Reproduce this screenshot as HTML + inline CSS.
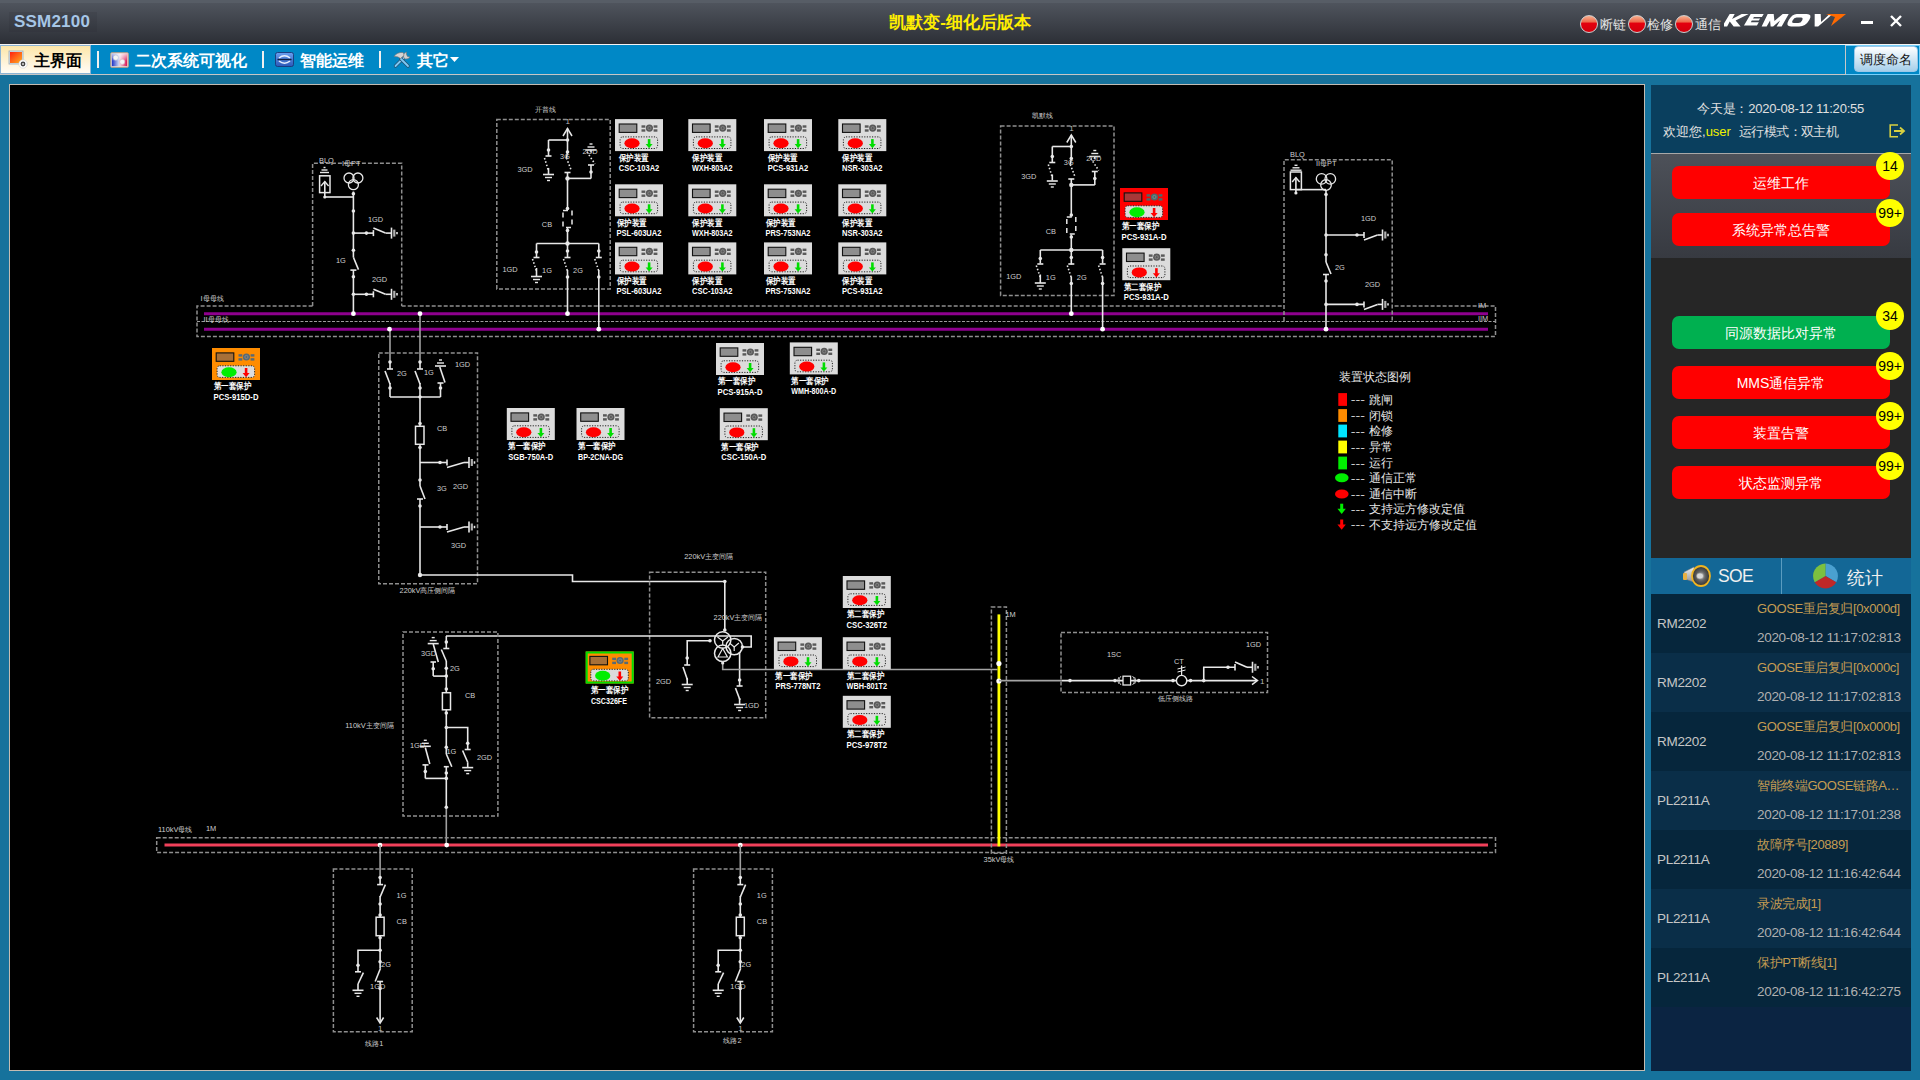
<!DOCTYPE html>
<html><head><meta charset="utf-8">
<style>
*{margin:0;padding:0;box-sizing:border-box}
html,body{width:1920px;height:1080px;overflow:hidden;background:#16729c;font-family:"Liberation Sans",sans-serif}
.abs{position:absolute}
#title{left:0;top:0;width:1920px;height:44px;background:linear-gradient(#575d66 0,#575d66 2.5px,#4f545d 3px,#2c2f36 100%)}
#appname{left:14px;top:11.5px;font-size:17px;font-weight:bold;color:#a6c6e6;letter-spacing:0.2px}
#apptitle{left:0;width:1920px;text-align:center;top:11px;font-size:17px;font-weight:bold;color:#ffee00}
.led{width:18px;height:18px;border-radius:50%;border:1.5px solid #cfcfcf;background:linear-gradient(#f8b090 0%,#ee6848 38%,#e4000e 44%,#d2000c 100%);overflow:hidden}

.ledt{font-size:12.5px;color:#e6e6e6;top:17px;letter-spacing:-0.5px}
#menubar{left:0;top:44px;width:1920px;height:31px;background:#0088c6;border-top:1.5px solid #f4f4f4;border-bottom:1.5px solid #c6c6c6}
#tab0{left:0px;top:45px;width:91px;height:29px;background:linear-gradient(#fde6a8,#fff8e8 80%,#fffcf4);border:1px solid #8cb4d4}
.mt{top:50.5px;font-size:16px;font-weight:bold;color:#fff}
.sep{width:2px;height:17px;background:#f0f0f0;top:51px}
#canvas{left:9px;top:84px;width:1636px;height:987px;border:1.5px solid #c4bcb2;background:#000;overflow:hidden}
#panel{left:1651px;top:85px;width:260px;height:986px;background:#0b2442}
#info{left:0;top:0;width:260px;height:68px;background:#0a3f5e}
#grad{left:0;top:68px;width:260px;height:105px;background:linear-gradient(#4d5159,#373a41);border-top:1.5px solid #a8a8a8}
#dark{left:0;top:173px;width:260px;height:300px;background:#262626}
.btn{left:21px;width:218px;height:33px;border-radius:7px;background:#ff0000;color:#fff;font-size:14px;text-align:center;line-height:35px}
.badge{width:28px;height:28px;border-radius:50%;background:#ffff00;color:#000;font-size:14px;text-align:center;line-height:28px}
#tabs{left:0;top:473px;width:260px;height:36px;background:#136796}
.row{left:0;width:260px;height:59px}
.r1{background:#06263c}.r2{background:#0a2e48}
.dev{left:6px;font-size:13.5px;color:#c6c6c6;letter-spacing:-0.3px;margin-top:1.5px}
.ev{left:106px;width:153px;font-size:13px;color:#c49c52;white-space:nowrap;overflow:hidden;text-overflow:ellipsis;letter-spacing:-0.4px}
.tm{left:106px;font-size:13.5px;color:#b0b0b0;letter-spacing:-0.3px;white-space:nowrap;margin-top:1px}
</style></head><body>
<div id="title" class="abs"></div>
<div class="abs" style="left:9px;top:12px;width:88px;height:20px;background:rgba(30,33,38,0.12)"></div>
<div id="appname" class="abs">SSM2100</div>
<div id="apptitle" class="abs">凯默变-细化后版本</div>
<div class="abs led" style="left:1580px;top:14.5px"></div><div class="abs ledt" style="left:1600px">断链</div>
<div class="abs led" style="left:1628px;top:14.5px"></div><div class="abs ledt" style="left:1647px">检修</div>
<div class="abs led" style="left:1675px;top:14.5px"></div><div class="abs ledt" style="left:1695px">通信</div>
<svg class="abs" style="left:1724px;top:10px" width="126" height="20" viewBox="0 0 126 20">
 <g fill="#fff" transform="skewX(-18) translate(4,0)">
  <path d="M3 4 h5 l-1 5 l8 -5 h7 l-11 6.5 l7 6 h-7 l-5.5 -5 l-1 5 h-5 z"/>
  <path d="M24 4 h13 l-0.8 3 h-8 l-0.4 1.5 h7 l-0.6 2 h-7 l-0.4 1.8 h8 l-0.8 3.2 h-13 z"/>
  <path d="M41 4 h6 l3 7 l6 -7 h6 l-3 12.5 h-5 l1.5 -6 l-5 6 h-2.5 l-2.5 -6 l-1.5 6 h-5 z"/>
  <path d="M70 4 h10 q6 0 4.5 6 q-1.5 6.5 -8 6.5 h-8 q-6 0 -4.5 -6.5 q1.5 -6 6 -6 z M71 7.5 q-2.5 0 -3 3 q-0.5 2.5 2 2.5 h4.5 q2.5 0 3 -2.5 q0.5 -3 -2 -3 z"/>
  <path d="M88 4 h6 l3 8 l6 -8 h3 l-10.5 12.5 h-3.5 z"/>
 </g>
 <path d="M102 4 h20 l-15 12 l4 -9 z" fill="#ff6a00"/>
</svg>
<div class="abs" style="left:1861px;top:21px;width:12px;height:2.5px;background:#fff"></div>
<svg class="abs" style="left:1889px;top:14px" width="14" height="14"><path d="M2 2 L12 12 M12 2 L2 12" stroke="#fff" stroke-width="2.4"/></svg>

<div id="menubar" class="abs"></div>
<div id="tab0" class="abs"></div>
<svg class="abs" style="left:8px;top:50px" width="20" height="19" viewBox="0 0 20 19">
 <rect x="1" y="1" width="14" height="13" fill="#dde4ec" stroke="#9ab" stroke-width="0.8"/>
 <rect x="2" y="2" width="12" height="11" fill="url(#gr1)"/>
 <defs><linearGradient id="gr1" x1="0" y1="0" x2="1" y2="1"><stop offset="0" stop-color="#ff2010"/><stop offset="1" stop-color="#ffb020"/></linearGradient></defs>
 <circle cx="15" cy="14" r="4.2" fill="#fff" stroke="#ccc" stroke-width="0.6"/><circle cx="15" cy="14" r="2.4" fill="#444"/><circle cx="15" cy="14" r="1" fill="#ddd"/>
</svg>
<div class="abs mt" style="left:34px;color:#000">主界面</div>
<div class="abs sep" style="left:97px"></div>
<svg class="abs" style="left:110px;top:51.5px" width="19" height="16" viewBox="0 0 19 16">
 <defs><linearGradient id="g2" x1="0" y1="0" x2="1" y2="0"><stop offset="0" stop-color="#1a30c8"/><stop offset="0.45" stop-color="#c8d0f0"/><stop offset="0.55" stop-color="#f0c8d8"/><stop offset="1" stop-color="#d81050"/></linearGradient>
 <linearGradient id="g2b" x1="0" y1="0" x2="0" y2="1"><stop offset="0" stop-color="#fff" stop-opacity="0.7"/><stop offset="0.6" stop-color="#fff" stop-opacity="0"/></linearGradient></defs>
 <rect x="0.5" y="0.5" width="18" height="15" rx="1.5" fill="#e8ddd0" stroke="#a89888" stroke-width="0.8"/>
 <rect x="1.8" y="1.8" width="15.4" height="12.4" fill="url(#g2)"/>
 <rect x="1.8" y="1.8" width="15.4" height="12.4" fill="url(#g2b)"/>
 <circle cx="5.8" cy="5.6" r="2.6" fill="#f4f4f4" stroke="#b8c0d8" stroke-width="0.6"/>
 <circle cx="12.2" cy="9.8" r="2.6" fill="#f4f4f4" stroke="#d8b0c0" stroke-width="0.6"/>
</svg>
<div class="abs mt" style="left:135px">二次系统可视化</div>
<div class="abs sep" style="left:262px"></div>
<svg class="abs" style="left:274.5px;top:52px" width="19" height="15" viewBox="0 0 19 15">
 <defs><linearGradient id="g3" x1="0" y1="0" x2="0" y2="1"><stop offset="0" stop-color="#6aa0f0"/><stop offset="1" stop-color="#2a58b8"/></linearGradient></defs>
 <rect x="0.5" y="0.5" width="18" height="14" rx="2" fill="url(#g3)" stroke="#1a3878" stroke-width="0.9"/>
 <path d="M4 6 Q9.5 1.5 15 6 M4 9 Q9.5 13.5 15 9" fill="none" stroke="#e8f0ff" stroke-width="1.6"/>
 <path d="M2.5 7.5 H16.5" stroke="#102040" stroke-width="1.3"/>
</svg>
<div class="abs mt" style="left:300px">智能运维</div>
<div class="abs sep" style="left:379px"></div>
<svg class="abs" style="left:393px;top:51px" width="18" height="17" viewBox="0 0 18 17">
 <path d="M2.5 15 L10.5 7" stroke="#23506e" stroke-width="3.2" stroke-linecap="round"/>
 <path d="M2.5 15 L10.5 7" stroke="#80c8f4" stroke-width="1.8" stroke-linecap="round"/>
 <path d="M15 15 L8 8" stroke="#23506e" stroke-width="3.2" stroke-linecap="round"/>
 <path d="M15 15 L8 8" stroke="#80c8f4" stroke-width="1.8" stroke-linecap="round"/>
 <path d="M1 5.5 Q4 1 10 1.5 L11.5 4 L7.5 7.5 Q5 5 1 5.5 Z" fill="#d4d4d4" stroke="#707070" stroke-width="0.6"/>
 <path d="M13.5 1 Q10 2 10.5 6 L12 8 Q15.5 8.5 17 6 L14.5 5.5 L13.5 3.5 Z" fill="#d0d0d0" stroke="#707070" stroke-width="0.6"/>
</svg>
<div class="abs mt" style="left:417px">其它</div>
<svg class="abs" style="left:450px;top:57px" width="9" height="5"><path d="M0 0 H9 L4.5 5 Z" fill="#fff"/></svg>
<div class="abs" style="left:1845px;top:45px;width:1px;height:29px;background:#c8c8c8"></div><div class="abs" style="left:1846px;top:44.5px;width:74px;height:30px;border:1px solid #78d0fa;border-left:none"></div>
<div class="abs" style="left:1854px;top:46px;width:64px;height:26px;border-radius:4px;border:1px solid #9cc8e8;background:linear-gradient(#ffffff,#a6cfea);font-size:12.5px;color:#111;text-align:center;line-height:26px">调度命名</div>

<div id="canvas" class="abs"><svg width="1633" height="984" viewBox="10 85 1633 984" style="position:absolute;left:0;top:0;font-family:'Liberation Sans',sans-serif">
<path d="M312.6 306 H197 V336.5 H1495.5 V306 H1392 M401.7 306 H1284" fill="none" stroke="#8e8e8e" stroke-width="1.5" stroke-dasharray="4,2"/>
<path d="M197 321.5 H1495.5" fill="none" stroke="#9c9c9c" stroke-width="1.2" stroke-dasharray="3,1.5"/>
<line x1="204" y1="313.7" x2="1488" y2="313.7" stroke="#8e008e" stroke-width="3.1"/>
<line x1="204" y1="329.2" x2="1488" y2="329.2" stroke="#8e008e" stroke-width="3.1"/>
<text x="200.5" y="301" font-size="7.4" text-anchor="start" fill="#cfcfcf" font-weight="normal">I母母线</text>
<text x="203.5" y="322" font-size="7.4" text-anchor="start" fill="#cfcfcf" font-weight="normal">II母母线</text>
<text x="1478" y="307.5" font-size="7.4" text-anchor="start" fill="#cfcfcf" font-weight="normal">IM</text>
<text x="1478" y="320.8" font-size="7.4" text-anchor="start" fill="#cfcfcf" font-weight="normal">IIM</text>
<path d="M312.6 306 V163.3 H401.7 V306" fill="none" stroke="#8e8e8e" stroke-width="1.5" stroke-dasharray="4,2"/>
<text x="319" y="163" font-size="7.4" text-anchor="start" fill="#cfcfcf" font-weight="normal">BLQ</text>
<text x="342" y="165.5" font-size="7.4" text-anchor="start" fill="#cfcfcf" font-weight="normal">I母PT</text>
<line x1="320" y1="172.5" x2="329" y2="172.5" stroke="#e8e8e8" stroke-width="1.4"/>
<line x1="321.5" y1="170" x2="327.5" y2="170" stroke="#e8e8e8" stroke-width="1.4"/>
<line x1="323.5" y1="167.5" x2="325.5" y2="167.5" stroke="#e8e8e8" stroke-width="1.4"/>
<rect x="319.6" y="175.8" width="10.4" height="16.8" fill="none" stroke="#e8e8e8" stroke-width="1.5"/>
<polyline points="321,186 324.8,181.5 328.6,186" fill="none" stroke="#e8e8e8" stroke-width="1.4"/>
<line x1="324.8" y1="181.5" x2="324.8" y2="197" stroke="#e8e8e8" stroke-width="1.6"/>
<circle cx="324.8" cy="197" r="1.6" fill="#e8e8e8"/>
<line x1="324.8" y1="197" x2="353.4" y2="197" stroke="#e8e8e8" stroke-width="1.6"/>
<circle cx="349" cy="178" r="5" fill="none" stroke="#e8e8e8" stroke-width="1.3"/>
<circle cx="357.9" cy="178" r="5" fill="none" stroke="#e8e8e8" stroke-width="1.3"/>
<circle cx="353.4" cy="184.7" r="5" fill="none" stroke="#e8e8e8" stroke-width="1.3"/>
<line x1="353.4" y1="191.5" x2="353.4" y2="250.3" stroke="#e8e8e8" stroke-width="1.6"/>
<circle cx="353.4" cy="193.8" r="1.8" fill="#e8e8e8"/>
<circle cx="353.4" cy="211" r="1.8" fill="#e8e8e8"/>
<circle cx="353.4" cy="233.1" r="1.8" fill="#e8e8e8"/>
<line x1="353.4" y1="233.1" x2="373.4" y2="233.1" stroke="#e8e8e8" stroke-width="1.6"/>
<circle cx="366.4" cy="233.1" r="1.8" fill="#e8e8e8"/>
<line x1="373.4" y1="230.1" x2="373.4" y2="236.1" stroke="#e8e8e8" stroke-width="1.6"/>
<line x1="373.4" y1="228.1" x2="385.5" y2="233.1" stroke="#e8e8e8" stroke-width="1.6"/>
<line x1="385.5" y1="233.1" x2="391.5" y2="233.1" stroke="#e8e8e8" stroke-width="1.6"/>
<line x1="391.5" y1="227.6" x2="391.5" y2="238.6" stroke="#e8e8e8" stroke-width="1.6"/>
<line x1="394.3" y1="229.6" x2="394.3" y2="236.6" stroke="#b0b0b0" stroke-width="2.2"/>
<line x1="397.0" y1="231.9" x2="397.0" y2="234.29999999999998" stroke="#e8e8e8" stroke-width="1.6"/>
<text x="368" y="222" font-size="7.4" text-anchor="start" fill="#cfcfcf" font-weight="normal">1GD</text>
<circle cx="353.4" cy="250.3" r="1.8" fill="#e8e8e8"/>
<line x1="353.4" y1="250.3" x2="353.4" y2="257.3" stroke="#e8e8e8" stroke-width="1.6"/>
<line x1="353.4" y1="257.3" x2="358.5" y2="269.6" stroke="#e8e8e8" stroke-width="1.6"/>
<line x1="350.4" y1="270.1" x2="356.4" y2="270.1" stroke="#e8e8e8" stroke-width="1.6"/>
<line x1="353.4" y1="270.1" x2="353.4" y2="313.7" stroke="#e8e8e8" stroke-width="1.6"/>
<circle cx="353.4" cy="276.7" r="1.8" fill="#e8e8e8"/>
<circle cx="353.4" cy="294.3" r="1.8" fill="#e8e8e8"/>
<text x="336" y="263" font-size="7.4" text-anchor="start" fill="#cfcfcf" font-weight="normal">1G</text>
<line x1="353.4" y1="294.3" x2="373.4" y2="294.3" stroke="#e8e8e8" stroke-width="1.6"/>
<circle cx="366.4" cy="294.3" r="1.8" fill="#e8e8e8"/>
<line x1="373.4" y1="291.3" x2="373.4" y2="297.3" stroke="#e8e8e8" stroke-width="1.6"/>
<line x1="373.4" y1="289.3" x2="385.5" y2="294.3" stroke="#e8e8e8" stroke-width="1.6"/>
<line x1="385.5" y1="294.3" x2="391.5" y2="294.3" stroke="#e8e8e8" stroke-width="1.6"/>
<line x1="391.5" y1="288.8" x2="391.5" y2="299.8" stroke="#e8e8e8" stroke-width="1.6"/>
<line x1="394.3" y1="290.8" x2="394.3" y2="297.8" stroke="#b0b0b0" stroke-width="2.2"/>
<line x1="397.0" y1="293.1" x2="397.0" y2="295.5" stroke="#e8e8e8" stroke-width="1.6"/>
<text x="372" y="282.2" font-size="7.4" text-anchor="start" fill="#cfcfcf" font-weight="normal">2GD</text>
<circle cx="353.4" cy="313.7" r="2.4" fill="#ffffff"/>
<rect x="496.8" y="119.5" width="113.40000000000003" height="169.39999999999998" fill="none" stroke="#8e8e8e" stroke-width="1.5" stroke-dasharray="4,2"/>
<text x="545.5" y="111.5" font-size="7.4" text-anchor="middle" fill="#cfcfcf" font-weight="normal">开普线</text>
<text x="565.5" y="124" font-size="8" text-anchor="start" fill="#bbbbbb" font-weight="normal">1</text>
<polyline points="563.0,136 567.5,128.5 572.0,136" fill="none" stroke="#e8e8e8" stroke-width="1.5"/>
<line x1="567.5" y1="128.5" x2="567.5" y2="152" stroke="#e8e8e8" stroke-width="1.6"/>
<line x1="548.5" y1="140" x2="567.5" y2="140" stroke="#e8e8e8" stroke-width="1.6"/>
<circle cx="567.5" cy="140" r="1.8" fill="#e8e8e8"/>
<line x1="548.5" y1="140" x2="548.5" y2="150" stroke="#e8e8e8" stroke-width="1.6"/>
<circle cx="548.5" cy="150" r="1.8" fill="#e8e8e8"/>
<line x1="545.5" y1="156" x2="551.5" y2="156" stroke="#e8e8e8" stroke-width="1.6"/>
<line x1="548.5" y1="150" x2="548.5" y2="156" stroke="#e8e8e8" stroke-width="1.6"/>
<line x1="544.5" y1="158" x2="548.5" y2="171" stroke="#e8e8e8" stroke-width="1.6" stroke-dasharray="1.5,2"/>
<line x1="548.5" y1="168" x2="548.5" y2="174" stroke="#e8e8e8" stroke-width="1.6"/>
<line x1="543.0" y1="174.5" x2="554.0" y2="174.5" stroke="#e8e8e8" stroke-width="1.6"/>
<line x1="545.0" y1="177.5" x2="552.0" y2="177.5" stroke="#e8e8e8" stroke-width="1.4"/>
<line x1="547.0" y1="180.5" x2="550.0" y2="180.5" stroke="#e8e8e8" stroke-width="1.4"/>
<text x="525" y="172" font-size="7.4" text-anchor="middle" fill="#cfcfcf" font-weight="normal">3GD</text>
<circle cx="567.5" cy="152" r="1.8" fill="#e8e8e8"/>
<line x1="567.5" y1="152" x2="566.5" y2="158" stroke="#e8e8e8" stroke-width="1.6"/>
<line x1="566.5" y1="158" x2="571.5" y2="171" stroke="#e8e8e8" stroke-width="1.6" stroke-dasharray="1.5,2"/>
<line x1="564.5" y1="172.5" x2="570.5" y2="172.5" stroke="#e8e8e8" stroke-width="1.6"/>
<line x1="567.5" y1="172.5" x2="567.5" y2="210" stroke="#e8e8e8" stroke-width="1.6"/>
<text x="565" y="158.5" font-size="7.4" text-anchor="middle" fill="#cfcfcf" font-weight="normal">3G</text>
<line x1="567.5" y1="178.4" x2="591" y2="178.4" stroke="#e8e8e8" stroke-width="1.6"/>
<circle cx="567.5" cy="178.4" r="2.2" fill="#e8e8e8"/>
<line x1="585.5" y1="150" x2="596.5" y2="150" stroke="#e8e8e8" stroke-width="1.6"/>
<line x1="587.5" y1="147" x2="594.5" y2="147" stroke="#e8e8e8" stroke-width="1.4"/>
<line x1="589.5" y1="144" x2="592.5" y2="144" stroke="#e8e8e8" stroke-width="1.4"/>
<line x1="591" y1="150" x2="591" y2="152.5" stroke="#e8e8e8" stroke-width="1.6"/>
<line x1="587" y1="152" x2="595" y2="164" stroke="#e8e8e8" stroke-width="1.6" stroke-dasharray="1.5,2"/>
<line x1="588" y1="165" x2="594" y2="165" stroke="#e8e8e8" stroke-width="1.6"/>
<line x1="591" y1="165" x2="591" y2="178.4" stroke="#e8e8e8" stroke-width="1.6"/>
<circle cx="591" cy="172" r="1.8" fill="#e8e8e8"/>
<text x="590" y="154" font-size="7.4" text-anchor="middle" fill="#cfcfcf" font-weight="normal">2GD</text>
<circle cx="567.5" cy="208.5" r="1.8" fill="#e8e8e8"/>
<rect x="563.0" y="210.6" width="9" height="17" fill="none" stroke="#e8e8e8" stroke-width="1.5" stroke-dasharray="5,4"/>
<circle cx="567.5" cy="230.5" r="1.8" fill="#e8e8e8"/>
<line x1="567.5" y1="228" x2="567.5" y2="258" stroke="#e8e8e8" stroke-width="1.6"/>
<text x="547" y="227" font-size="7.4" text-anchor="middle" fill="#cfcfcf" font-weight="normal">CB</text>
<line x1="536.5" y1="243.5" x2="598.8" y2="243.5" stroke="#e8e8e8" stroke-width="1.6"/>
<circle cx="567.5" cy="243.5" r="2.2" fill="#e8e8e8"/>
<line x1="536.5" y1="243.5" x2="536.5" y2="257" stroke="#e8e8e8" stroke-width="1.6"/>
<circle cx="536.5" cy="252" r="1.8" fill="#e8e8e8"/>
<line x1="533.5" y1="257.5" x2="539.5" y2="257.5" stroke="#e8e8e8" stroke-width="1.6"/>
<line x1="532.5" y1="259" x2="536.5" y2="271" stroke="#e8e8e8" stroke-width="1.6" stroke-dasharray="1.5,2"/>
<line x1="536.5" y1="268" x2="536.5" y2="276.5" stroke="#e8e8e8" stroke-width="1.6"/>
<line x1="531.0" y1="276.5" x2="542.0" y2="276.5" stroke="#e8e8e8" stroke-width="1.6"/>
<line x1="533.0" y1="279.5" x2="540.0" y2="279.5" stroke="#e8e8e8" stroke-width="1.4"/>
<line x1="535.0" y1="282.5" x2="538.0" y2="282.5" stroke="#e8e8e8" stroke-width="1.4"/>
<text x="510" y="272" font-size="7.4" text-anchor="middle" fill="#cfcfcf" font-weight="normal">1GD</text>
<circle cx="567.5" cy="251" r="1.8" fill="#e8e8e8"/>
<line x1="564.5" y1="257.5" x2="570.5" y2="257.5" stroke="#e8e8e8" stroke-width="1.6"/>
<line x1="563.5" y1="259" x2="567.5" y2="271" stroke="#e8e8e8" stroke-width="1.6" stroke-dasharray="1.5,2"/>
<line x1="567.5" y1="270" x2="567.5" y2="313.7" stroke="#e8e8e8" stroke-width="1.6"/>
<circle cx="567.5" cy="277" r="1.8" fill="#e8e8e8"/>
<text x="547" y="273" font-size="7.4" text-anchor="middle" fill="#cfcfcf" font-weight="normal">1G</text>
<line x1="598.8" y1="243.5" x2="598.8" y2="257" stroke="#e8e8e8" stroke-width="1.6"/>
<circle cx="598.8" cy="251" r="1.8" fill="#e8e8e8"/>
<line x1="595.8" y1="257.5" x2="601.8" y2="257.5" stroke="#e8e8e8" stroke-width="1.6"/>
<line x1="594.8" y1="259" x2="598.8" y2="271" stroke="#e8e8e8" stroke-width="1.6" stroke-dasharray="1.5,2"/>
<line x1="598.8" y1="270" x2="598.8" y2="329.2" stroke="#e8e8e8" stroke-width="1.6"/>
<circle cx="598.8" cy="277" r="1.8" fill="#e8e8e8"/>
<text x="578" y="273" font-size="7.4" text-anchor="middle" fill="#cfcfcf" font-weight="normal">2G</text>
<circle cx="567.5" cy="313.7" r="2.4" fill="#ffffff"/>
<circle cx="598.8" cy="329.2" r="2.4" fill="#ffffff"/>
<rect x="1000.6" y="126.0" width="113.39999999999998" height="169.39999999999998" fill="none" stroke="#8e8e8e" stroke-width="1.5" stroke-dasharray="4,2"/>
<text x="1042.5" y="118.0" font-size="7.4" text-anchor="middle" fill="#cfcfcf" font-weight="normal">凯默线</text>
<text x="1069.3" y="130.5" font-size="8" text-anchor="start" fill="#bbbbbb" font-weight="normal">1</text>
<polyline points="1066.8,142.5 1071.3,135.0 1075.8,142.5" fill="none" stroke="#e8e8e8" stroke-width="1.5"/>
<line x1="1071.3" y1="135.0" x2="1071.3" y2="158.5" stroke="#e8e8e8" stroke-width="1.6"/>
<line x1="1052.3" y1="146.5" x2="1071.3" y2="146.5" stroke="#e8e8e8" stroke-width="1.6"/>
<circle cx="1071.3" cy="146.5" r="1.8" fill="#e8e8e8"/>
<line x1="1052.3" y1="146.5" x2="1052.3" y2="156.5" stroke="#e8e8e8" stroke-width="1.6"/>
<circle cx="1052.3" cy="156.5" r="1.8" fill="#e8e8e8"/>
<line x1="1049.3" y1="162.5" x2="1055.3" y2="162.5" stroke="#e8e8e8" stroke-width="1.6"/>
<line x1="1052.3" y1="156.5" x2="1052.3" y2="162.5" stroke="#e8e8e8" stroke-width="1.6"/>
<line x1="1048.3" y1="164.5" x2="1052.3" y2="177.5" stroke="#e8e8e8" stroke-width="1.6" stroke-dasharray="1.5,2"/>
<line x1="1052.3" y1="174.5" x2="1052.3" y2="180.5" stroke="#e8e8e8" stroke-width="1.6"/>
<line x1="1046.8" y1="181.0" x2="1057.8" y2="181.0" stroke="#e8e8e8" stroke-width="1.6"/>
<line x1="1048.8" y1="184.0" x2="1055.8" y2="184.0" stroke="#e8e8e8" stroke-width="1.4"/>
<line x1="1050.8" y1="187.0" x2="1053.8" y2="187.0" stroke="#e8e8e8" stroke-width="1.4"/>
<text x="1028.8" y="178.5" font-size="7.4" text-anchor="middle" fill="#cfcfcf" font-weight="normal">3GD</text>
<circle cx="1071.3" cy="158.5" r="1.8" fill="#e8e8e8"/>
<line x1="1071.3" y1="158.5" x2="1070.3" y2="164.5" stroke="#e8e8e8" stroke-width="1.6"/>
<line x1="1070.3" y1="164.5" x2="1075.3" y2="177.5" stroke="#e8e8e8" stroke-width="1.6" stroke-dasharray="1.5,2"/>
<line x1="1068.3" y1="179.0" x2="1074.3" y2="179.0" stroke="#e8e8e8" stroke-width="1.6"/>
<line x1="1071.3" y1="179.0" x2="1071.3" y2="216.5" stroke="#e8e8e8" stroke-width="1.6"/>
<text x="1068.8" y="165.0" font-size="7.4" text-anchor="middle" fill="#cfcfcf" font-weight="normal">3G</text>
<line x1="1071.3" y1="184.9" x2="1094.8" y2="184.9" stroke="#e8e8e8" stroke-width="1.6"/>
<circle cx="1071.3" cy="184.9" r="2.2" fill="#e8e8e8"/>
<line x1="1089.3" y1="156.5" x2="1100.3" y2="156.5" stroke="#e8e8e8" stroke-width="1.6"/>
<line x1="1091.3" y1="153.5" x2="1098.3" y2="153.5" stroke="#e8e8e8" stroke-width="1.4"/>
<line x1="1093.3" y1="150.5" x2="1096.3" y2="150.5" stroke="#e8e8e8" stroke-width="1.4"/>
<line x1="1094.8" y1="156.5" x2="1094.8" y2="159.0" stroke="#e8e8e8" stroke-width="1.6"/>
<line x1="1090.8" y1="158.5" x2="1098.8" y2="170.5" stroke="#e8e8e8" stroke-width="1.6" stroke-dasharray="1.5,2"/>
<line x1="1091.8" y1="171.5" x2="1097.8" y2="171.5" stroke="#e8e8e8" stroke-width="1.6"/>
<line x1="1094.8" y1="171.5" x2="1094.8" y2="184.9" stroke="#e8e8e8" stroke-width="1.6"/>
<circle cx="1094.8" cy="178.5" r="1.8" fill="#e8e8e8"/>
<text x="1093.8" y="160.5" font-size="7.4" text-anchor="middle" fill="#cfcfcf" font-weight="normal">2GD</text>
<circle cx="1071.3" cy="215.0" r="1.8" fill="#e8e8e8"/>
<rect x="1066.8" y="217.1" width="9" height="17" fill="none" stroke="#e8e8e8" stroke-width="1.5" stroke-dasharray="5,4"/>
<circle cx="1071.3" cy="237.0" r="1.8" fill="#e8e8e8"/>
<line x1="1071.3" y1="234.5" x2="1071.3" y2="264.5" stroke="#e8e8e8" stroke-width="1.6"/>
<text x="1050.8" y="233.5" font-size="7.4" text-anchor="middle" fill="#cfcfcf" font-weight="normal">CB</text>
<line x1="1040.3" y1="250.0" x2="1102.6" y2="250.0" stroke="#e8e8e8" stroke-width="1.6"/>
<circle cx="1071.3" cy="250.0" r="2.2" fill="#e8e8e8"/>
<line x1="1040.3" y1="250.0" x2="1040.3" y2="263.5" stroke="#e8e8e8" stroke-width="1.6"/>
<circle cx="1040.3" cy="258.5" r="1.8" fill="#e8e8e8"/>
<line x1="1037.3" y1="264.0" x2="1043.3" y2="264.0" stroke="#e8e8e8" stroke-width="1.6"/>
<line x1="1036.3" y1="265.5" x2="1040.3" y2="277.5" stroke="#e8e8e8" stroke-width="1.6" stroke-dasharray="1.5,2"/>
<line x1="1040.3" y1="274.5" x2="1040.3" y2="283.0" stroke="#e8e8e8" stroke-width="1.6"/>
<line x1="1034.8" y1="283.0" x2="1045.8" y2="283.0" stroke="#e8e8e8" stroke-width="1.6"/>
<line x1="1036.8" y1="286.0" x2="1043.8" y2="286.0" stroke="#e8e8e8" stroke-width="1.4"/>
<line x1="1038.8" y1="289.0" x2="1041.8" y2="289.0" stroke="#e8e8e8" stroke-width="1.4"/>
<text x="1013.8" y="278.5" font-size="7.4" text-anchor="middle" fill="#cfcfcf" font-weight="normal">1GD</text>
<circle cx="1071.3" cy="257.5" r="1.8" fill="#e8e8e8"/>
<line x1="1068.3" y1="264.0" x2="1074.3" y2="264.0" stroke="#e8e8e8" stroke-width="1.6"/>
<line x1="1067.3" y1="265.5" x2="1071.3" y2="277.5" stroke="#e8e8e8" stroke-width="1.6" stroke-dasharray="1.5,2"/>
<line x1="1071.3" y1="276.5" x2="1071.3" y2="313.7" stroke="#e8e8e8" stroke-width="1.6"/>
<circle cx="1071.3" cy="283.5" r="1.8" fill="#e8e8e8"/>
<text x="1050.8" y="279.5" font-size="7.4" text-anchor="middle" fill="#cfcfcf" font-weight="normal">1G</text>
<line x1="1102.6" y1="250.0" x2="1102.6" y2="263.5" stroke="#e8e8e8" stroke-width="1.6"/>
<circle cx="1102.6" cy="257.5" r="1.8" fill="#e8e8e8"/>
<line x1="1099.6" y1="264.0" x2="1105.6" y2="264.0" stroke="#e8e8e8" stroke-width="1.6"/>
<line x1="1098.6" y1="265.5" x2="1102.6" y2="277.5" stroke="#e8e8e8" stroke-width="1.6" stroke-dasharray="1.5,2"/>
<line x1="1102.6" y1="276.5" x2="1102.6" y2="329.2" stroke="#e8e8e8" stroke-width="1.6"/>
<circle cx="1102.6" cy="283.5" r="1.8" fill="#e8e8e8"/>
<text x="1081.8" y="279.5" font-size="7.4" text-anchor="middle" fill="#cfcfcf" font-weight="normal">2G</text>
<circle cx="1071.3" cy="313.7" r="2.4" fill="#ffffff"/>
<circle cx="1102.6" cy="329.2" r="2.4" fill="#ffffff"/>
<path d="M1284 321 V159.8 H1392.2 V321" fill="none" stroke="#8e8e8e" stroke-width="1.5" stroke-dasharray="4,2"/>
<text x="1290" y="157.3" font-size="7.4" text-anchor="start" fill="#cfcfcf" font-weight="normal">BLQ</text>
<text x="1316" y="166" font-size="7.4" text-anchor="start" fill="#cfcfcf" font-weight="normal">II母PT</text>
<line x1="1290.5" y1="170.2" x2="1301.5" y2="170.2" stroke="#e8e8e8" stroke-width="1.4"/>
<line x1="1292.5" y1="167.8" x2="1299.5" y2="167.8" stroke="#e8e8e8" stroke-width="1.4"/>
<line x1="1294.5" y1="165.3" x2="1297.5" y2="165.3" stroke="#e8e8e8" stroke-width="1.4"/>
<rect x="1290.4" y="172" width="11" height="17.6" fill="none" stroke="#e8e8e8" stroke-width="1.5"/>
<polyline points="1292.2,182 1295.9,177.5 1299.6,182" fill="none" stroke="#e8e8e8" stroke-width="1.4"/>
<line x1="1295.9" y1="177.5" x2="1295.9" y2="193" stroke="#e8e8e8" stroke-width="1.6"/>
<circle cx="1295.9" cy="193" r="1.6" fill="#e8e8e8"/>
<line x1="1295.9" y1="189.6" x2="1326" y2="189.6" stroke="#e8e8e8" stroke-width="1.6"/>
<circle cx="1321.6" cy="178.9" r="5.3" fill="none" stroke="#e8e8e8" stroke-width="1.3"/>
<circle cx="1330.3" cy="178.9" r="5.3" fill="none" stroke="#e8e8e8" stroke-width="1.3"/>
<circle cx="1326" cy="185" r="5.3" fill="none" stroke="#e8e8e8" stroke-width="1.3"/>
<line x1="1326" y1="190" x2="1326" y2="262" stroke="#e8e8e8" stroke-width="1.6"/>
<circle cx="1326" cy="194.5" r="1.8" fill="#e8e8e8"/>
<circle cx="1326" cy="235" r="1.8" fill="#e8e8e8"/>
<line x1="1326" y1="235" x2="1364" y2="235" stroke="#e8e8e8" stroke-width="1.6"/>
<circle cx="1357" cy="235" r="1.8" fill="#e8e8e8"/>
<line x1="1364" y1="232" x2="1364" y2="238" stroke="#e8e8e8" stroke-width="1.6"/>
<line x1="1364" y1="240" x2="1377.5" y2="235" stroke="#e8e8e8" stroke-width="1.6"/>
<line x1="1377.5" y1="235" x2="1382.5" y2="235" stroke="#e8e8e8" stroke-width="1.6"/>
<line x1="1382.5" y1="229.5" x2="1382.5" y2="240.5" stroke="#e8e8e8" stroke-width="1.6"/>
<line x1="1385.3" y1="231.5" x2="1385.3" y2="238.5" stroke="#b0b0b0" stroke-width="2.2"/>
<line x1="1388.0" y1="233.8" x2="1388.0" y2="236.2" stroke="#e8e8e8" stroke-width="1.6"/>
<text x="1361" y="221" font-size="7.4" text-anchor="start" fill="#cfcfcf" font-weight="normal">1GD</text>
<circle cx="1326" cy="254.8" r="1.8" fill="#e8e8e8"/>
<line x1="1326" y1="262" x2="1331" y2="274" stroke="#e8e8e8" stroke-width="1.6"/>
<line x1="1323" y1="274.5" x2="1329" y2="274.5" stroke="#e8e8e8" stroke-width="1.6"/>
<line x1="1326" y1="274.5" x2="1326" y2="329.2" stroke="#e8e8e8" stroke-width="1.6"/>
<circle cx="1326" cy="281" r="1.8" fill="#e8e8e8"/>
<circle cx="1326" cy="304.4" r="1.8" fill="#e8e8e8"/>
<text x="1335" y="269.5" font-size="7.4" text-anchor="start" fill="#cfcfcf" font-weight="normal">2G</text>
<line x1="1326" y1="304.4" x2="1364" y2="304.4" stroke="#e8e8e8" stroke-width="1.6"/>
<circle cx="1357" cy="304.4" r="1.8" fill="#e8e8e8"/>
<line x1="1364" y1="301.4" x2="1364" y2="307.4" stroke="#e8e8e8" stroke-width="1.6"/>
<line x1="1364" y1="309.4" x2="1377.5" y2="304.4" stroke="#e8e8e8" stroke-width="1.6"/>
<line x1="1377.5" y1="304.4" x2="1382.5" y2="304.4" stroke="#e8e8e8" stroke-width="1.6"/>
<line x1="1382.5" y1="298.9" x2="1382.5" y2="309.9" stroke="#e8e8e8" stroke-width="1.6"/>
<line x1="1385.3" y1="300.9" x2="1385.3" y2="307.9" stroke="#b0b0b0" stroke-width="2.2"/>
<line x1="1388.0" y1="303.2" x2="1388.0" y2="305.59999999999997" stroke="#e8e8e8" stroke-width="1.6"/>
<text x="1365" y="286.5" font-size="7.4" text-anchor="start" fill="#cfcfcf" font-weight="normal">2GD</text>
<circle cx="1326" cy="329.2" r="2.4" fill="#ffffff"/>
<rect x="378.75" y="353" width="98.75" height="230.75" fill="none" stroke="#8e8e8e" stroke-width="1.5" stroke-dasharray="4,2"/>
<text x="427.5" y="592.5" font-size="7.4" text-anchor="middle" fill="#cfcfcf" font-weight="normal">220kV高压侧间隔</text>
<line x1="390" y1="329.2" x2="390" y2="362" stroke="#a0a0a0" stroke-width="1.6"/>
<line x1="420" y1="313.7" x2="420" y2="362" stroke="#a0a0a0" stroke-width="1.6"/>
<line x1="390" y1="362" x2="390" y2="369" stroke="#e8e8e8" stroke-width="1.6"/>
<line x1="420" y1="362" x2="420" y2="369" stroke="#e8e8e8" stroke-width="1.6"/>
<circle cx="420" cy="313.7" r="2.4" fill="#ffffff"/>
<circle cx="389.5" cy="329.2" r="2.4" fill="#ffffff"/>
<circle cx="390" cy="362" r="1.8" fill="#e8e8e8"/>
<line x1="387" y1="369" x2="393" y2="369" stroke="#e8e8e8" stroke-width="1.6"/>
<line x1="385" y1="371" x2="390" y2="384" stroke="#e8e8e8" stroke-width="1.6"/>
<line x1="390" y1="383" x2="390" y2="397" stroke="#e8e8e8" stroke-width="1.6"/>
<circle cx="390" cy="388" r="1.8" fill="#e8e8e8"/>
<circle cx="420" cy="362" r="1.8" fill="#e8e8e8"/>
<line x1="417" y1="369" x2="423" y2="369" stroke="#e8e8e8" stroke-width="1.6"/>
<line x1="415" y1="371" x2="420" y2="384" stroke="#e8e8e8" stroke-width="1.6"/>
<line x1="420" y1="383" x2="420" y2="397" stroke="#e8e8e8" stroke-width="1.6"/>
<circle cx="420" cy="388" r="1.8" fill="#e8e8e8"/>
<text x="397" y="376" font-size="7.4" text-anchor="start" fill="#cfcfcf" font-weight="normal">2G</text>
<text x="424" y="375" font-size="7.4" text-anchor="start" fill="#cfcfcf" font-weight="normal">1G</text>
<line x1="435.0" y1="366" x2="446.0" y2="366" stroke="#e8e8e8" stroke-width="1.6"/>
<line x1="437.0" y1="363" x2="444.0" y2="363" stroke="#e8e8e8" stroke-width="1.4"/>
<line x1="439.0" y1="360" x2="442.0" y2="360" stroke="#e8e8e8" stroke-width="1.4"/>
<line x1="439.8" y1="367" x2="445" y2="382.5" stroke="#e8e8e8" stroke-width="1.6"/>
<line x1="437.5" y1="383" x2="443.5" y2="383" stroke="#e8e8e8" stroke-width="1.6"/>
<line x1="440.5" y1="383" x2="440.5" y2="397" stroke="#e8e8e8" stroke-width="1.6"/>
<circle cx="440.5" cy="388" r="1.8" fill="#e8e8e8"/>
<text x="455" y="367" font-size="7.4" text-anchor="start" fill="#cfcfcf" font-weight="normal">1GD</text>
<line x1="390" y1="397" x2="440.5" y2="397" stroke="#e8e8e8" stroke-width="1.6"/>
<circle cx="420" cy="397" r="1.8" fill="#e8e8e8"/>
<line x1="420" y1="397" x2="420" y2="426.3" stroke="#e8e8e8" stroke-width="1.6"/>
<line x1="420" y1="444.3" x2="420" y2="486" stroke="#e8e8e8" stroke-width="1.6"/>
<line x1="420" y1="499" x2="420" y2="575" stroke="#e8e8e8" stroke-width="1.6"/>
<circle cx="420" cy="423.5" r="1.8" fill="#e8e8e8"/>
<rect x="415.5" y="426.3" width="8.5" height="18" fill="none" stroke="#e8e8e8" stroke-width="1.5"/>
<circle cx="420" cy="447.5" r="1.8" fill="#e8e8e8"/>
<text x="437" y="430.5" font-size="7.4" text-anchor="start" fill="#cfcfcf" font-weight="normal">CB</text>
<line x1="420" y1="462.5" x2="447" y2="462.5" stroke="#e8e8e8" stroke-width="1.6"/>
<circle cx="440" cy="462.5" r="1.8" fill="#e8e8e8"/>
<line x1="447" y1="459.5" x2="447" y2="465.5" stroke="#e8e8e8" stroke-width="1.6"/>
<line x1="447" y1="467.5" x2="464" y2="462.5" stroke="#e8e8e8" stroke-width="1.6"/>
<line x1="464" y1="462.5" x2="469" y2="462.5" stroke="#e8e8e8" stroke-width="1.6"/>
<line x1="469" y1="457.0" x2="469" y2="468.0" stroke="#e8e8e8" stroke-width="1.6"/>
<line x1="471.8" y1="459.0" x2="471.8" y2="466.0" stroke="#b0b0b0" stroke-width="2.2"/>
<line x1="474.5" y1="461.3" x2="474.5" y2="463.7" stroke="#e8e8e8" stroke-width="1.6"/>
<circle cx="420" cy="480" r="1.8" fill="#e8e8e8"/>
<line x1="420" y1="486" x2="425" y2="499" stroke="#e8e8e8" stroke-width="1.6"/>
<line x1="417" y1="499" x2="423" y2="499" stroke="#e8e8e8" stroke-width="1.6"/>
<circle cx="420" cy="506" r="1.8" fill="#e8e8e8"/>
<text x="437" y="491" font-size="7.4" text-anchor="start" fill="#cfcfcf" font-weight="normal">3G</text>
<text x="453" y="488.5" font-size="7.4" text-anchor="start" fill="#cfcfcf" font-weight="normal">2GD</text>
<line x1="420" y1="527" x2="447" y2="527" stroke="#e8e8e8" stroke-width="1.6"/>
<circle cx="440" cy="527" r="1.8" fill="#e8e8e8"/>
<line x1="447" y1="524" x2="447" y2="530" stroke="#e8e8e8" stroke-width="1.6"/>
<line x1="447" y1="532" x2="464" y2="527" stroke="#e8e8e8" stroke-width="1.6"/>
<line x1="464" y1="527" x2="469" y2="527" stroke="#e8e8e8" stroke-width="1.6"/>
<line x1="469" y1="521.5" x2="469" y2="532.5" stroke="#e8e8e8" stroke-width="1.6"/>
<line x1="471.8" y1="523.5" x2="471.8" y2="530.5" stroke="#b0b0b0" stroke-width="2.2"/>
<line x1="474.5" y1="525.8" x2="474.5" y2="528.2" stroke="#e8e8e8" stroke-width="1.6"/>
<text x="451" y="548" font-size="7.4" text-anchor="start" fill="#cfcfcf" font-weight="normal">3GD</text>
<circle cx="420" cy="575" r="2.2" fill="#e8e8e8"/>
<polyline points="420,575 572.5,575 572.5,581.5 724.8,581.5 724.8,630" fill="none" stroke="#e8e8e8" stroke-width="1.6"/>
<circle cx="724.8" cy="581.5" r="1.8" fill="#e8e8e8"/>
<rect x="649.6" y="572.2" width="116.10000000000002" height="145.5999999999999" fill="none" stroke="#8e8e8e" stroke-width="1.5" stroke-dasharray="4,2"/>
<text x="708.7" y="558.5" font-size="7.4" text-anchor="middle" fill="#cfcfcf" font-weight="normal">220kV主变间隔</text>
<text x="738" y="619.5" font-size="7.4" text-anchor="middle" fill="#cfcfcf" font-weight="normal">220kV主变间隔</text>
<circle cx="724.8" cy="630" r="1.8" fill="#e8e8e8"/>
<circle cx="722.7" cy="640" r="8.2" fill="none" stroke="#e8e8e8" stroke-width="1.5"/>
<circle cx="734.2" cy="646.6" r="8.2" fill="none" stroke="#e8e8e8" stroke-width="1.5"/>
<circle cx="722.7" cy="653.3" r="8.2" fill="none" stroke="#e8e8e8" stroke-width="1.5"/>
<polyline points="717.5,637 722.7,641 727.9,637" fill="none" stroke="#e8e8e8" stroke-width="1.2"/>
<line x1="722.7" y1="641" x2="722.7" y2="645" stroke="#e8e8e8" stroke-width="1.2"/>
<polyline points="729.5,643 734.2,647 738.9,643" fill="none" stroke="#e8e8e8" stroke-width="1.2"/>
<line x1="734.2" y1="647" x2="734.2" y2="651" stroke="#e8e8e8" stroke-width="1.2"/>
<path d="M718 657 L722.7 648.5 L727.4 657 Z" fill="none" stroke="#e8e8e8" stroke-width="1.2"/>
<polyline points="446,636 751.2,636 751.2,647 742.5,647" fill="none" stroke="#e8e8e8" stroke-width="1.6"/>
<circle cx="742.5" cy="647" r="1.8" fill="#e8e8e8"/>
<polyline points="710,640.8 687.2,640.8 687.2,665" fill="none" stroke="#e8e8e8" stroke-width="1.6"/>
<circle cx="710" cy="640.8" r="1.8" fill="#e8e8e8"/>
<circle cx="687.2" cy="658" r="1.8" fill="#e8e8e8"/>
<line x1="684.2" y1="665" x2="690.2" y2="665" stroke="#e8e8e8" stroke-width="1.6"/>
<line x1="683" y1="667" x2="687.5" y2="680" stroke="#e8e8e8" stroke-width="1.6"/>
<line x1="687.2" y1="678" x2="687.2" y2="684" stroke="#e8e8e8" stroke-width="1.6"/>
<line x1="681.7" y1="684.5" x2="692.7" y2="684.5" stroke="#e8e8e8" stroke-width="1.6"/>
<line x1="683.7" y1="687.5" x2="690.7" y2="687.5" stroke="#e8e8e8" stroke-width="1.4"/>
<line x1="685.7" y1="690.5" x2="688.7" y2="690.5" stroke="#e8e8e8" stroke-width="1.4"/>
<text x="656" y="684" font-size="7.4" text-anchor="start" fill="#cfcfcf" font-weight="normal">2GD</text>
<line x1="739.6" y1="652" x2="739.6" y2="686" stroke="#e8e8e8" stroke-width="1.6"/>
<circle cx="739.6" cy="680" r="1.8" fill="#e8e8e8"/>
<line x1="736.6" y1="686" x2="742.6" y2="686" stroke="#e8e8e8" stroke-width="1.6"/>
<line x1="735.5" y1="688" x2="740" y2="700" stroke="#e8e8e8" stroke-width="1.6"/>
<line x1="739.6" y1="698" x2="739.6" y2="704" stroke="#e8e8e8" stroke-width="1.6"/>
<line x1="734.1" y1="704.5" x2="745.1" y2="704.5" stroke="#e8e8e8" stroke-width="1.6"/>
<line x1="736.1" y1="707.5" x2="743.1" y2="707.5" stroke="#e8e8e8" stroke-width="1.4"/>
<line x1="738.1" y1="710.5" x2="741.1" y2="710.5" stroke="#e8e8e8" stroke-width="1.4"/>
<text x="744" y="708" font-size="7.4" text-anchor="start" fill="#cfcfcf" font-weight="normal">1GD</text>
<polyline points="722.7,661.5 722.7,669.5 997.5,669.5" fill="none" stroke="#a4a4a4" stroke-width="1.6"/>
<circle cx="722.7" cy="663" r="1.6" fill="#e8e8e8"/>
<g transform="translate(615,119.1)">
<rect x="0" y="0" width="48" height="32" fill="#dcdcdc"/>
<rect x="4.2" y="4.9" width="17.6" height="8.4" fill="#8e8e8e" stroke="#111" stroke-width="1.1"/>
<rect x="26.5" y="6.2" width="3.8" height="2.4" fill="#5a5a5a"/>
<rect x="26.5" y="10.2" width="3.8" height="2.4" fill="#5a5a5a"/>
<rect x="38.6" y="6.2" width="3.8" height="2.4" fill="#5a5a5a"/>
<rect x="38.6" y="10.2" width="3.8" height="2.4" fill="#5a5a5a"/>
<circle cx="34.4" cy="9.0" r="3.6" fill="#5a5a5a"/>
<circle cx="34.4" cy="9.0" r="1.6" fill="none" stroke="#999" stroke-width="0.6"/>
<rect x="5.1" y="17.8" width="37.5" height="11.6" rx="2.6" fill="#dcdcdc" stroke="#222" stroke-width="1" stroke-dasharray="1.2,1.4"/>
<ellipse cx="17" cy="24.2" rx="7.6" ry="5" fill="#ff0000"/>
<rect x="32.8" y="20" width="2.6" height="5.6" fill="#00dd00"/>
<path d="M30.6 25 L37.6 25 L34.1 29.2 Z" fill="#00dd00"/>
</g>
<text x="618.75" y="160.5" font-size="8.8" text-anchor="start" fill="#ffffff" font-weight="bold" textLength="30.0" lengthAdjust="spacingAndGlyphs">保护装置</text>
<text x="618.75" y="171.1" font-size="8.6" text-anchor="start" fill="#ffffff" font-weight="bold" textLength="40.5" lengthAdjust="spacingAndGlyphs">CSC-103A2</text>
<g transform="translate(688.3,119.1)">
<rect x="0" y="0" width="48" height="32" fill="#dcdcdc"/>
<rect x="4.2" y="4.9" width="17.6" height="8.4" fill="#8e8e8e" stroke="#111" stroke-width="1.1"/>
<rect x="26.5" y="6.2" width="3.8" height="2.4" fill="#5a5a5a"/>
<rect x="26.5" y="10.2" width="3.8" height="2.4" fill="#5a5a5a"/>
<rect x="38.6" y="6.2" width="3.8" height="2.4" fill="#5a5a5a"/>
<rect x="38.6" y="10.2" width="3.8" height="2.4" fill="#5a5a5a"/>
<circle cx="34.4" cy="9.0" r="3.6" fill="#5a5a5a"/>
<circle cx="34.4" cy="9.0" r="1.6" fill="none" stroke="#999" stroke-width="0.6"/>
<rect x="5.1" y="17.8" width="37.5" height="11.6" rx="2.6" fill="#dcdcdc" stroke="#222" stroke-width="1" stroke-dasharray="1.2,1.4"/>
<ellipse cx="17" cy="24.2" rx="7.6" ry="5" fill="#ff0000"/>
<rect x="32.8" y="20" width="2.6" height="5.6" fill="#00dd00"/>
<path d="M30.6 25 L37.6 25 L34.1 29.2 Z" fill="#00dd00"/>
</g>
<text x="692.05" y="160.5" font-size="8.8" text-anchor="start" fill="#ffffff" font-weight="bold" textLength="30.0" lengthAdjust="spacingAndGlyphs">保护装置</text>
<text x="692.05" y="171.1" font-size="8.6" text-anchor="start" fill="#ffffff" font-weight="bold" textLength="40.5" lengthAdjust="spacingAndGlyphs">WXH-803A2</text>
<g transform="translate(764,119.1)">
<rect x="0" y="0" width="48" height="32" fill="#dcdcdc"/>
<rect x="4.2" y="4.9" width="17.6" height="8.4" fill="#8e8e8e" stroke="#111" stroke-width="1.1"/>
<rect x="26.5" y="6.2" width="3.8" height="2.4" fill="#5a5a5a"/>
<rect x="26.5" y="10.2" width="3.8" height="2.4" fill="#5a5a5a"/>
<rect x="38.6" y="6.2" width="3.8" height="2.4" fill="#5a5a5a"/>
<rect x="38.6" y="10.2" width="3.8" height="2.4" fill="#5a5a5a"/>
<circle cx="34.4" cy="9.0" r="3.6" fill="#5a5a5a"/>
<circle cx="34.4" cy="9.0" r="1.6" fill="none" stroke="#999" stroke-width="0.6"/>
<rect x="5.1" y="17.8" width="37.5" height="11.6" rx="2.6" fill="#dcdcdc" stroke="#222" stroke-width="1" stroke-dasharray="1.2,1.4"/>
<ellipse cx="17" cy="24.2" rx="7.6" ry="5" fill="#ff0000"/>
<rect x="32.8" y="20" width="2.6" height="5.6" fill="#00dd00"/>
<path d="M30.6 25 L37.6 25 L34.1 29.2 Z" fill="#00dd00"/>
</g>
<text x="767.75" y="160.5" font-size="8.8" text-anchor="start" fill="#ffffff" font-weight="bold" textLength="30.0" lengthAdjust="spacingAndGlyphs">保护装置</text>
<text x="767.75" y="171.1" font-size="8.6" text-anchor="start" fill="#ffffff" font-weight="bold" textLength="40.5" lengthAdjust="spacingAndGlyphs">PCS-931A2</text>
<g transform="translate(838.3,119.1)">
<rect x="0" y="0" width="48" height="32" fill="#dcdcdc"/>
<rect x="4.2" y="4.9" width="17.6" height="8.4" fill="#8e8e8e" stroke="#111" stroke-width="1.1"/>
<rect x="26.5" y="6.2" width="3.8" height="2.4" fill="#5a5a5a"/>
<rect x="26.5" y="10.2" width="3.8" height="2.4" fill="#5a5a5a"/>
<rect x="38.6" y="6.2" width="3.8" height="2.4" fill="#5a5a5a"/>
<rect x="38.6" y="10.2" width="3.8" height="2.4" fill="#5a5a5a"/>
<circle cx="34.4" cy="9.0" r="3.6" fill="#5a5a5a"/>
<circle cx="34.4" cy="9.0" r="1.6" fill="none" stroke="#999" stroke-width="0.6"/>
<rect x="5.1" y="17.8" width="37.5" height="11.6" rx="2.6" fill="#dcdcdc" stroke="#222" stroke-width="1" stroke-dasharray="1.2,1.4"/>
<ellipse cx="17" cy="24.2" rx="7.6" ry="5" fill="#ff0000"/>
<rect x="32.8" y="20" width="2.6" height="5.6" fill="#00dd00"/>
<path d="M30.6 25 L37.6 25 L34.1 29.2 Z" fill="#00dd00"/>
</g>
<text x="842.05" y="160.5" font-size="8.8" text-anchor="start" fill="#ffffff" font-weight="bold" textLength="30.0" lengthAdjust="spacingAndGlyphs">保护装置</text>
<text x="842.05" y="171.1" font-size="8.6" text-anchor="start" fill="#ffffff" font-weight="bold" textLength="40.5" lengthAdjust="spacingAndGlyphs">NSR-303A2</text>
<g transform="translate(615,184.3)">
<rect x="0" y="0" width="48" height="32" fill="#dcdcdc"/>
<rect x="4.2" y="4.9" width="17.6" height="8.4" fill="#8e8e8e" stroke="#111" stroke-width="1.1"/>
<rect x="26.5" y="6.2" width="3.8" height="2.4" fill="#5a5a5a"/>
<rect x="26.5" y="10.2" width="3.8" height="2.4" fill="#5a5a5a"/>
<rect x="38.6" y="6.2" width="3.8" height="2.4" fill="#5a5a5a"/>
<rect x="38.6" y="10.2" width="3.8" height="2.4" fill="#5a5a5a"/>
<circle cx="34.4" cy="9.0" r="3.6" fill="#5a5a5a"/>
<circle cx="34.4" cy="9.0" r="1.6" fill="none" stroke="#999" stroke-width="0.6"/>
<rect x="5.1" y="17.8" width="37.5" height="11.6" rx="2.6" fill="#dcdcdc" stroke="#222" stroke-width="1" stroke-dasharray="1.2,1.4"/>
<ellipse cx="17" cy="24.2" rx="7.6" ry="5" fill="#ff0000"/>
<rect x="32.8" y="20" width="2.6" height="5.6" fill="#00dd00"/>
<path d="M30.6 25 L37.6 25 L34.1 29.2 Z" fill="#00dd00"/>
</g>
<text x="616.5" y="225.70000000000002" font-size="8.8" text-anchor="start" fill="#ffffff" font-weight="bold" textLength="30.0" lengthAdjust="spacingAndGlyphs">保护装置</text>
<text x="616.5" y="236.3" font-size="8.6" text-anchor="start" fill="#ffffff" font-weight="bold" textLength="45.0" lengthAdjust="spacingAndGlyphs">PSL-603UA2</text>
<g transform="translate(688.3,184.3)">
<rect x="0" y="0" width="48" height="32" fill="#dcdcdc"/>
<rect x="4.2" y="4.9" width="17.6" height="8.4" fill="#8e8e8e" stroke="#111" stroke-width="1.1"/>
<rect x="26.5" y="6.2" width="3.8" height="2.4" fill="#5a5a5a"/>
<rect x="26.5" y="10.2" width="3.8" height="2.4" fill="#5a5a5a"/>
<rect x="38.6" y="6.2" width="3.8" height="2.4" fill="#5a5a5a"/>
<rect x="38.6" y="10.2" width="3.8" height="2.4" fill="#5a5a5a"/>
<circle cx="34.4" cy="9.0" r="3.6" fill="#5a5a5a"/>
<circle cx="34.4" cy="9.0" r="1.6" fill="none" stroke="#999" stroke-width="0.6"/>
<rect x="5.1" y="17.8" width="37.5" height="11.6" rx="2.6" fill="#dcdcdc" stroke="#222" stroke-width="1" stroke-dasharray="1.2,1.4"/>
<ellipse cx="17" cy="24.2" rx="7.6" ry="5" fill="#ff0000"/>
<rect x="32.8" y="20" width="2.6" height="5.6" fill="#00dd00"/>
<path d="M30.6 25 L37.6 25 L34.1 29.2 Z" fill="#00dd00"/>
</g>
<text x="692.05" y="225.70000000000002" font-size="8.8" text-anchor="start" fill="#ffffff" font-weight="bold" textLength="30.0" lengthAdjust="spacingAndGlyphs">保护装置</text>
<text x="692.05" y="236.3" font-size="8.6" text-anchor="start" fill="#ffffff" font-weight="bold" textLength="40.5" lengthAdjust="spacingAndGlyphs">WXH-803A2</text>
<g transform="translate(764,184.3)">
<rect x="0" y="0" width="48" height="32" fill="#dcdcdc"/>
<rect x="4.2" y="4.9" width="17.6" height="8.4" fill="#8e8e8e" stroke="#111" stroke-width="1.1"/>
<rect x="26.5" y="6.2" width="3.8" height="2.4" fill="#5a5a5a"/>
<rect x="26.5" y="10.2" width="3.8" height="2.4" fill="#5a5a5a"/>
<rect x="38.6" y="6.2" width="3.8" height="2.4" fill="#5a5a5a"/>
<rect x="38.6" y="10.2" width="3.8" height="2.4" fill="#5a5a5a"/>
<circle cx="34.4" cy="9.0" r="3.6" fill="#5a5a5a"/>
<circle cx="34.4" cy="9.0" r="1.6" fill="none" stroke="#999" stroke-width="0.6"/>
<rect x="5.1" y="17.8" width="37.5" height="11.6" rx="2.6" fill="#dcdcdc" stroke="#222" stroke-width="1" stroke-dasharray="1.2,1.4"/>
<ellipse cx="17" cy="24.2" rx="7.6" ry="5" fill="#ff0000"/>
<rect x="32.8" y="20" width="2.6" height="5.6" fill="#00dd00"/>
<path d="M30.6 25 L37.6 25 L34.1 29.2 Z" fill="#00dd00"/>
</g>
<text x="765.5" y="225.70000000000002" font-size="8.8" text-anchor="start" fill="#ffffff" font-weight="bold" textLength="30.0" lengthAdjust="spacingAndGlyphs">保护装置</text>
<text x="765.5" y="236.3" font-size="8.6" text-anchor="start" fill="#ffffff" font-weight="bold" textLength="45.0" lengthAdjust="spacingAndGlyphs">PRS-753NA2</text>
<g transform="translate(838.3,184.3)">
<rect x="0" y="0" width="48" height="32" fill="#dcdcdc"/>
<rect x="4.2" y="4.9" width="17.6" height="8.4" fill="#8e8e8e" stroke="#111" stroke-width="1.1"/>
<rect x="26.5" y="6.2" width="3.8" height="2.4" fill="#5a5a5a"/>
<rect x="26.5" y="10.2" width="3.8" height="2.4" fill="#5a5a5a"/>
<rect x="38.6" y="6.2" width="3.8" height="2.4" fill="#5a5a5a"/>
<rect x="38.6" y="10.2" width="3.8" height="2.4" fill="#5a5a5a"/>
<circle cx="34.4" cy="9.0" r="3.6" fill="#5a5a5a"/>
<circle cx="34.4" cy="9.0" r="1.6" fill="none" stroke="#999" stroke-width="0.6"/>
<rect x="5.1" y="17.8" width="37.5" height="11.6" rx="2.6" fill="#dcdcdc" stroke="#222" stroke-width="1" stroke-dasharray="1.2,1.4"/>
<ellipse cx="17" cy="24.2" rx="7.6" ry="5" fill="#ff0000"/>
<rect x="32.8" y="20" width="2.6" height="5.6" fill="#00dd00"/>
<path d="M30.6 25 L37.6 25 L34.1 29.2 Z" fill="#00dd00"/>
</g>
<text x="842.05" y="225.70000000000002" font-size="8.8" text-anchor="start" fill="#ffffff" font-weight="bold" textLength="30.0" lengthAdjust="spacingAndGlyphs">保护装置</text>
<text x="842.05" y="236.3" font-size="8.6" text-anchor="start" fill="#ffffff" font-weight="bold" textLength="40.5" lengthAdjust="spacingAndGlyphs">NSR-303A2</text>
<g transform="translate(615,242.4)">
<rect x="0" y="0" width="48" height="32" fill="#dcdcdc"/>
<rect x="4.2" y="4.9" width="17.6" height="8.4" fill="#8e8e8e" stroke="#111" stroke-width="1.1"/>
<rect x="26.5" y="6.2" width="3.8" height="2.4" fill="#5a5a5a"/>
<rect x="26.5" y="10.2" width="3.8" height="2.4" fill="#5a5a5a"/>
<rect x="38.6" y="6.2" width="3.8" height="2.4" fill="#5a5a5a"/>
<rect x="38.6" y="10.2" width="3.8" height="2.4" fill="#5a5a5a"/>
<circle cx="34.4" cy="9.0" r="3.6" fill="#5a5a5a"/>
<circle cx="34.4" cy="9.0" r="1.6" fill="none" stroke="#999" stroke-width="0.6"/>
<rect x="5.1" y="17.8" width="37.5" height="11.6" rx="2.6" fill="#dcdcdc" stroke="#222" stroke-width="1" stroke-dasharray="1.2,1.4"/>
<ellipse cx="17" cy="24.2" rx="7.6" ry="5" fill="#ff0000"/>
<rect x="32.8" y="20" width="2.6" height="5.6" fill="#00dd00"/>
<path d="M30.6 25 L37.6 25 L34.1 29.2 Z" fill="#00dd00"/>
</g>
<text x="616.5" y="283.79999999999995" font-size="8.8" text-anchor="start" fill="#ffffff" font-weight="bold" textLength="30.0" lengthAdjust="spacingAndGlyphs">保护装置</text>
<text x="616.5" y="294.4" font-size="8.6" text-anchor="start" fill="#ffffff" font-weight="bold" textLength="45.0" lengthAdjust="spacingAndGlyphs">PSL-603UA2</text>
<g transform="translate(688.3,242.4)">
<rect x="0" y="0" width="48" height="32" fill="#dcdcdc"/>
<rect x="4.2" y="4.9" width="17.6" height="8.4" fill="#8e8e8e" stroke="#111" stroke-width="1.1"/>
<rect x="26.5" y="6.2" width="3.8" height="2.4" fill="#5a5a5a"/>
<rect x="26.5" y="10.2" width="3.8" height="2.4" fill="#5a5a5a"/>
<rect x="38.6" y="6.2" width="3.8" height="2.4" fill="#5a5a5a"/>
<rect x="38.6" y="10.2" width="3.8" height="2.4" fill="#5a5a5a"/>
<circle cx="34.4" cy="9.0" r="3.6" fill="#5a5a5a"/>
<circle cx="34.4" cy="9.0" r="1.6" fill="none" stroke="#999" stroke-width="0.6"/>
<rect x="5.1" y="17.8" width="37.5" height="11.6" rx="2.6" fill="#dcdcdc" stroke="#222" stroke-width="1" stroke-dasharray="1.2,1.4"/>
<ellipse cx="17" cy="24.2" rx="7.6" ry="5" fill="#ff0000"/>
<rect x="32.8" y="20" width="2.6" height="5.6" fill="#00dd00"/>
<path d="M30.6 25 L37.6 25 L34.1 29.2 Z" fill="#00dd00"/>
</g>
<text x="692.05" y="283.79999999999995" font-size="8.8" text-anchor="start" fill="#ffffff" font-weight="bold" textLength="30.0" lengthAdjust="spacingAndGlyphs">保护装置</text>
<text x="692.05" y="294.4" font-size="8.6" text-anchor="start" fill="#ffffff" font-weight="bold" textLength="40.5" lengthAdjust="spacingAndGlyphs">CSC-103A2</text>
<g transform="translate(764,242.4)">
<rect x="0" y="0" width="48" height="32" fill="#dcdcdc"/>
<rect x="4.2" y="4.9" width="17.6" height="8.4" fill="#8e8e8e" stroke="#111" stroke-width="1.1"/>
<rect x="26.5" y="6.2" width="3.8" height="2.4" fill="#5a5a5a"/>
<rect x="26.5" y="10.2" width="3.8" height="2.4" fill="#5a5a5a"/>
<rect x="38.6" y="6.2" width="3.8" height="2.4" fill="#5a5a5a"/>
<rect x="38.6" y="10.2" width="3.8" height="2.4" fill="#5a5a5a"/>
<circle cx="34.4" cy="9.0" r="3.6" fill="#5a5a5a"/>
<circle cx="34.4" cy="9.0" r="1.6" fill="none" stroke="#999" stroke-width="0.6"/>
<rect x="5.1" y="17.8" width="37.5" height="11.6" rx="2.6" fill="#dcdcdc" stroke="#222" stroke-width="1" stroke-dasharray="1.2,1.4"/>
<ellipse cx="17" cy="24.2" rx="7.6" ry="5" fill="#ff0000"/>
<rect x="32.8" y="20" width="2.6" height="5.6" fill="#00dd00"/>
<path d="M30.6 25 L37.6 25 L34.1 29.2 Z" fill="#00dd00"/>
</g>
<text x="765.5" y="283.79999999999995" font-size="8.8" text-anchor="start" fill="#ffffff" font-weight="bold" textLength="30.0" lengthAdjust="spacingAndGlyphs">保护装置</text>
<text x="765.5" y="294.4" font-size="8.6" text-anchor="start" fill="#ffffff" font-weight="bold" textLength="45.0" lengthAdjust="spacingAndGlyphs">PRS-753NA2</text>
<g transform="translate(838.3,242.4)">
<rect x="0" y="0" width="48" height="32" fill="#dcdcdc"/>
<rect x="4.2" y="4.9" width="17.6" height="8.4" fill="#8e8e8e" stroke="#111" stroke-width="1.1"/>
<rect x="26.5" y="6.2" width="3.8" height="2.4" fill="#5a5a5a"/>
<rect x="26.5" y="10.2" width="3.8" height="2.4" fill="#5a5a5a"/>
<rect x="38.6" y="6.2" width="3.8" height="2.4" fill="#5a5a5a"/>
<rect x="38.6" y="10.2" width="3.8" height="2.4" fill="#5a5a5a"/>
<circle cx="34.4" cy="9.0" r="3.6" fill="#5a5a5a"/>
<circle cx="34.4" cy="9.0" r="1.6" fill="none" stroke="#999" stroke-width="0.6"/>
<rect x="5.1" y="17.8" width="37.5" height="11.6" rx="2.6" fill="#dcdcdc" stroke="#222" stroke-width="1" stroke-dasharray="1.2,1.4"/>
<ellipse cx="17" cy="24.2" rx="7.6" ry="5" fill="#ff0000"/>
<rect x="32.8" y="20" width="2.6" height="5.6" fill="#00dd00"/>
<path d="M30.6 25 L37.6 25 L34.1 29.2 Z" fill="#00dd00"/>
</g>
<text x="842.05" y="283.79999999999995" font-size="8.8" text-anchor="start" fill="#ffffff" font-weight="bold" textLength="30.0" lengthAdjust="spacingAndGlyphs">保护装置</text>
<text x="842.05" y="294.4" font-size="8.6" text-anchor="start" fill="#ffffff" font-weight="bold" textLength="40.5" lengthAdjust="spacingAndGlyphs">PCS-931A2</text>
<g transform="translate(212,348)">
<rect x="0" y="0" width="48" height="32" fill="#ff8c00"/>
<rect x="4.2" y="4.9" width="17.6" height="8.4" fill="#a87038" stroke="#111" stroke-width="1.1"/>
<rect x="26.5" y="6.2" width="3.8" height="2.4" fill="#5a6a74"/>
<rect x="26.5" y="10.2" width="3.8" height="2.4" fill="#5a6a74"/>
<rect x="38.6" y="6.2" width="3.8" height="2.4" fill="#5a6a74"/>
<rect x="38.6" y="10.2" width="3.8" height="2.4" fill="#5a6a74"/>
<circle cx="34.4" cy="9.0" r="3.6" fill="#5a6a74"/>
<circle cx="34.4" cy="9.0" r="1.6" fill="none" stroke="#999" stroke-width="0.6"/>
<rect x="5.1" y="17.8" width="37.5" height="11.6" rx="2.6" fill="#dcdcdc" stroke="#222" stroke-width="1" stroke-dasharray="1.2,1.4"/>
<ellipse cx="17" cy="24.2" rx="7.6" ry="5" fill="#00ee00"/>
<rect x="32.8" y="20" width="2.6" height="5.6" fill="#ff0000"/>
<path d="M30.6 25 L37.6 25 L34.1 29.2 Z" fill="#ff0000"/>
</g>
<text x="213.5" y="389.4" font-size="8.8" text-anchor="start" fill="#ffffff" font-weight="bold" textLength="37.5" lengthAdjust="spacingAndGlyphs">第一套保护</text>
<text x="213.5" y="400" font-size="8.6" text-anchor="start" fill="#ffffff" font-weight="bold" textLength="45.0" lengthAdjust="spacingAndGlyphs">PCS-915D-D</text>
<g transform="translate(1120,188)">
<rect x="0" y="0" width="48" height="32" fill="#ff0000"/>
<rect x="4.2" y="4.9" width="17.6" height="8.4" fill="#a83838" stroke="#111" stroke-width="1.1"/>
<rect x="26.5" y="6.2" width="3.8" height="2.4" fill="#4a6a6a"/>
<rect x="26.5" y="10.2" width="3.8" height="2.4" fill="#4a6a6a"/>
<rect x="38.6" y="6.2" width="3.8" height="2.4" fill="#4a6a6a"/>
<rect x="38.6" y="10.2" width="3.8" height="2.4" fill="#4a6a6a"/>
<circle cx="34.4" cy="9.0" r="3.6" fill="#4a6a6a"/>
<circle cx="34.4" cy="9.0" r="1.6" fill="none" stroke="#999" stroke-width="0.6"/>
<rect x="5.1" y="17.8" width="37.5" height="11.6" rx="2.6" fill="#dcdcdc" stroke="#222" stroke-width="1" stroke-dasharray="1.2,1.4"/>
<ellipse cx="17" cy="24.2" rx="7.6" ry="5" fill="#00ee00"/>
<rect x="32.8" y="20" width="2.6" height="5.6" fill="#ff0000"/>
<path d="M30.6 25 L37.6 25 L34.1 29.2 Z" fill="#ff0000"/>
</g>
<text x="1121.5" y="229.4" font-size="8.8" text-anchor="start" fill="#ffffff" font-weight="bold" textLength="37.5" lengthAdjust="spacingAndGlyphs">第一套保护</text>
<text x="1121.5" y="240" font-size="8.6" text-anchor="start" fill="#ffffff" font-weight="bold" textLength="45.0" lengthAdjust="spacingAndGlyphs">PCS-931A-D</text>
<g transform="translate(1122.3,248.2)">
<rect x="0" y="0" width="48" height="32" fill="#dcdcdc"/>
<rect x="4.2" y="4.9" width="17.6" height="8.4" fill="#8e8e8e" stroke="#111" stroke-width="1.1"/>
<rect x="26.5" y="6.2" width="3.8" height="2.4" fill="#5a5a5a"/>
<rect x="26.5" y="10.2" width="3.8" height="2.4" fill="#5a5a5a"/>
<rect x="38.6" y="6.2" width="3.8" height="2.4" fill="#5a5a5a"/>
<rect x="38.6" y="10.2" width="3.8" height="2.4" fill="#5a5a5a"/>
<circle cx="34.4" cy="9.0" r="3.6" fill="#5a5a5a"/>
<circle cx="34.4" cy="9.0" r="1.6" fill="none" stroke="#999" stroke-width="0.6"/>
<rect x="5.1" y="17.8" width="37.5" height="11.6" rx="2.6" fill="#dcdcdc" stroke="#222" stroke-width="1" stroke-dasharray="1.2,1.4"/>
<ellipse cx="17" cy="24.2" rx="7.6" ry="5" fill="#ff0000"/>
<rect x="32.8" y="20" width="2.6" height="5.6" fill="#ff0000"/>
<path d="M30.6 25 L37.6 25 L34.1 29.2 Z" fill="#ff0000"/>
</g>
<text x="1123.8" y="289.59999999999997" font-size="8.8" text-anchor="start" fill="#ffffff" font-weight="bold" textLength="37.5" lengthAdjust="spacingAndGlyphs">第二套保护</text>
<text x="1123.8" y="300.2" font-size="8.6" text-anchor="start" fill="#ffffff" font-weight="bold" textLength="45.0" lengthAdjust="spacingAndGlyphs">PCS-931A-D</text>
<g transform="translate(716,343)">
<rect x="0" y="0" width="48" height="32" fill="#dcdcdc"/>
<rect x="4.2" y="4.9" width="17.6" height="8.4" fill="#8e8e8e" stroke="#111" stroke-width="1.1"/>
<rect x="26.5" y="6.2" width="3.8" height="2.4" fill="#5a5a5a"/>
<rect x="26.5" y="10.2" width="3.8" height="2.4" fill="#5a5a5a"/>
<rect x="38.6" y="6.2" width="3.8" height="2.4" fill="#5a5a5a"/>
<rect x="38.6" y="10.2" width="3.8" height="2.4" fill="#5a5a5a"/>
<circle cx="34.4" cy="9.0" r="3.6" fill="#5a5a5a"/>
<circle cx="34.4" cy="9.0" r="1.6" fill="none" stroke="#999" stroke-width="0.6"/>
<rect x="5.1" y="17.8" width="37.5" height="11.6" rx="2.6" fill="#dcdcdc" stroke="#222" stroke-width="1" stroke-dasharray="1.2,1.4"/>
<ellipse cx="17" cy="24.2" rx="7.6" ry="5" fill="#ff0000"/>
<rect x="32.8" y="20" width="2.6" height="5.6" fill="#00dd00"/>
<path d="M30.6 25 L37.6 25 L34.1 29.2 Z" fill="#00dd00"/>
</g>
<text x="717.5" y="384.4" font-size="8.8" text-anchor="start" fill="#ffffff" font-weight="bold" textLength="37.5" lengthAdjust="spacingAndGlyphs">第一套保护</text>
<text x="717.5" y="395" font-size="8.6" text-anchor="start" fill="#ffffff" font-weight="bold" textLength="45.0" lengthAdjust="spacingAndGlyphs">PCS-915A-D</text>
<g transform="translate(789.8,342.4)">
<rect x="0" y="0" width="48" height="32" fill="#dcdcdc"/>
<rect x="4.2" y="4.9" width="17.6" height="8.4" fill="#8e8e8e" stroke="#111" stroke-width="1.1"/>
<rect x="26.5" y="6.2" width="3.8" height="2.4" fill="#5a5a5a"/>
<rect x="26.5" y="10.2" width="3.8" height="2.4" fill="#5a5a5a"/>
<rect x="38.6" y="6.2" width="3.8" height="2.4" fill="#5a5a5a"/>
<rect x="38.6" y="10.2" width="3.8" height="2.4" fill="#5a5a5a"/>
<circle cx="34.4" cy="9.0" r="3.6" fill="#5a5a5a"/>
<circle cx="34.4" cy="9.0" r="1.6" fill="none" stroke="#999" stroke-width="0.6"/>
<rect x="5.1" y="17.8" width="37.5" height="11.6" rx="2.6" fill="#dcdcdc" stroke="#222" stroke-width="1" stroke-dasharray="1.2,1.4"/>
<ellipse cx="17" cy="24.2" rx="7.6" ry="5" fill="#ff0000"/>
<rect x="32.8" y="20" width="2.6" height="5.6" fill="#00dd00"/>
<path d="M30.6 25 L37.6 25 L34.1 29.2 Z" fill="#00dd00"/>
</g>
<text x="791.3" y="383.79999999999995" font-size="8.8" text-anchor="start" fill="#ffffff" font-weight="bold" textLength="37.5" lengthAdjust="spacingAndGlyphs">第一套保护</text>
<text x="791.3" y="394.4" font-size="8.6" text-anchor="start" fill="#ffffff" font-weight="bold" textLength="45.0" lengthAdjust="spacingAndGlyphs">WMH-800A-D</text>
<g transform="translate(719.8,408.2)">
<rect x="0" y="0" width="48" height="32" fill="#dcdcdc"/>
<rect x="4.2" y="4.9" width="17.6" height="8.4" fill="#8e8e8e" stroke="#111" stroke-width="1.1"/>
<rect x="26.5" y="6.2" width="3.8" height="2.4" fill="#5a5a5a"/>
<rect x="26.5" y="10.2" width="3.8" height="2.4" fill="#5a5a5a"/>
<rect x="38.6" y="6.2" width="3.8" height="2.4" fill="#5a5a5a"/>
<rect x="38.6" y="10.2" width="3.8" height="2.4" fill="#5a5a5a"/>
<circle cx="34.4" cy="9.0" r="3.6" fill="#5a5a5a"/>
<circle cx="34.4" cy="9.0" r="1.6" fill="none" stroke="#999" stroke-width="0.6"/>
<rect x="5.1" y="17.8" width="37.5" height="11.6" rx="2.6" fill="#dcdcdc" stroke="#222" stroke-width="1" stroke-dasharray="1.2,1.4"/>
<ellipse cx="17" cy="24.2" rx="7.6" ry="5" fill="#ff0000"/>
<rect x="32.8" y="20" width="2.6" height="5.6" fill="#00dd00"/>
<path d="M30.6 25 L37.6 25 L34.1 29.2 Z" fill="#00dd00"/>
</g>
<text x="721.3" y="449.59999999999997" font-size="8.8" text-anchor="start" fill="#ffffff" font-weight="bold" textLength="37.5" lengthAdjust="spacingAndGlyphs">第一套保护</text>
<text x="721.3" y="460.2" font-size="8.6" text-anchor="start" fill="#ffffff" font-weight="bold" textLength="45.0" lengthAdjust="spacingAndGlyphs">CSC-150A-D</text>
<g transform="translate(506.8,408)">
<rect x="0" y="0" width="48" height="32" fill="#dcdcdc"/>
<rect x="4.2" y="4.9" width="17.6" height="8.4" fill="#8e8e8e" stroke="#111" stroke-width="1.1"/>
<rect x="26.5" y="6.2" width="3.8" height="2.4" fill="#5a5a5a"/>
<rect x="26.5" y="10.2" width="3.8" height="2.4" fill="#5a5a5a"/>
<rect x="38.6" y="6.2" width="3.8" height="2.4" fill="#5a5a5a"/>
<rect x="38.6" y="10.2" width="3.8" height="2.4" fill="#5a5a5a"/>
<circle cx="34.4" cy="9.0" r="3.6" fill="#5a5a5a"/>
<circle cx="34.4" cy="9.0" r="1.6" fill="none" stroke="#999" stroke-width="0.6"/>
<rect x="5.1" y="17.8" width="37.5" height="11.6" rx="2.6" fill="#dcdcdc" stroke="#222" stroke-width="1" stroke-dasharray="1.2,1.4"/>
<ellipse cx="17" cy="24.2" rx="7.6" ry="5" fill="#ff0000"/>
<rect x="32.8" y="20" width="2.6" height="5.6" fill="#00dd00"/>
<path d="M30.6 25 L37.6 25 L34.1 29.2 Z" fill="#00dd00"/>
</g>
<text x="508.29999999999995" y="449.4" font-size="8.8" text-anchor="start" fill="#ffffff" font-weight="bold" textLength="37.5" lengthAdjust="spacingAndGlyphs">第一套保护</text>
<text x="508.29999999999995" y="460" font-size="8.6" text-anchor="start" fill="#ffffff" font-weight="bold" textLength="45.0" lengthAdjust="spacingAndGlyphs">SGB-750A-D</text>
<g transform="translate(576.5,408)">
<rect x="0" y="0" width="48" height="32" fill="#dcdcdc"/>
<rect x="4.2" y="4.9" width="17.6" height="8.4" fill="#8e8e8e" stroke="#111" stroke-width="1.1"/>
<rect x="26.5" y="6.2" width="3.8" height="2.4" fill="#5a5a5a"/>
<rect x="26.5" y="10.2" width="3.8" height="2.4" fill="#5a5a5a"/>
<rect x="38.6" y="6.2" width="3.8" height="2.4" fill="#5a5a5a"/>
<rect x="38.6" y="10.2" width="3.8" height="2.4" fill="#5a5a5a"/>
<circle cx="34.4" cy="9.0" r="3.6" fill="#5a5a5a"/>
<circle cx="34.4" cy="9.0" r="1.6" fill="none" stroke="#999" stroke-width="0.6"/>
<rect x="5.1" y="17.8" width="37.5" height="11.6" rx="2.6" fill="#dcdcdc" stroke="#222" stroke-width="1" stroke-dasharray="1.2,1.4"/>
<ellipse cx="17" cy="24.2" rx="7.6" ry="5" fill="#ff0000"/>
<rect x="32.8" y="20" width="2.6" height="5.6" fill="#00dd00"/>
<path d="M30.6 25 L37.6 25 L34.1 29.2 Z" fill="#00dd00"/>
</g>
<text x="578.0" y="449.4" font-size="8.8" text-anchor="start" fill="#ffffff" font-weight="bold" textLength="37.5" lengthAdjust="spacingAndGlyphs">第一套保护</text>
<text x="578.0" y="460" font-size="8.6" text-anchor="start" fill="#ffffff" font-weight="bold" textLength="45.0" lengthAdjust="spacingAndGlyphs">BP-2CNA-DG</text>
<g transform="translate(585.7,651.5)">
<rect x="0" y="0" width="48" height="32" fill="#ff8c00"/>
<rect x="1" y="1" width="46" height="30" fill="none" stroke="#00dd00" stroke-width="2"/>
<rect x="4.2" y="4.9" width="17.6" height="8.4" fill="#a87038" stroke="#111" stroke-width="1.1"/>
<rect x="26.5" y="6.2" width="3.8" height="2.4" fill="#5a6a74"/>
<rect x="26.5" y="10.2" width="3.8" height="2.4" fill="#5a6a74"/>
<rect x="38.6" y="6.2" width="3.8" height="2.4" fill="#5a6a74"/>
<rect x="38.6" y="10.2" width="3.8" height="2.4" fill="#5a6a74"/>
<circle cx="34.4" cy="9.0" r="3.6" fill="#5a6a74"/>
<circle cx="34.4" cy="9.0" r="1.6" fill="none" stroke="#999" stroke-width="0.6"/>
<rect x="5.1" y="17.8" width="37.5" height="11.6" rx="2.6" fill="#dcdcdc" stroke="#222" stroke-width="1" stroke-dasharray="1.2,1.4"/>
<ellipse cx="17" cy="24.2" rx="7.6" ry="5" fill="#00ee00"/>
<rect x="32.8" y="20" width="2.6" height="5.6" fill="#ff0000"/>
<path d="M30.6 25 L37.6 25 L34.1 29.2 Z" fill="#ff0000"/>
</g>
<text x="590.95" y="692.9" font-size="8.8" text-anchor="start" fill="#ffffff" font-weight="bold" textLength="37.5" lengthAdjust="spacingAndGlyphs">第一套保护</text>
<text x="590.95" y="703.5" font-size="8.6" text-anchor="start" fill="#ffffff" font-weight="bold" textLength="36.0" lengthAdjust="spacingAndGlyphs">CSC326FE</text>
<g transform="translate(842.8,576)">
<rect x="0" y="0" width="48" height="32" fill="#dcdcdc"/>
<rect x="4.2" y="4.9" width="17.6" height="8.4" fill="#8e8e8e" stroke="#111" stroke-width="1.1"/>
<rect x="26.5" y="6.2" width="3.8" height="2.4" fill="#5a5a5a"/>
<rect x="26.5" y="10.2" width="3.8" height="2.4" fill="#5a5a5a"/>
<rect x="38.6" y="6.2" width="3.8" height="2.4" fill="#5a5a5a"/>
<rect x="38.6" y="10.2" width="3.8" height="2.4" fill="#5a5a5a"/>
<circle cx="34.4" cy="9.0" r="3.6" fill="#5a5a5a"/>
<circle cx="34.4" cy="9.0" r="1.6" fill="none" stroke="#999" stroke-width="0.6"/>
<rect x="5.1" y="17.8" width="37.5" height="11.6" rx="2.6" fill="#dcdcdc" stroke="#222" stroke-width="1" stroke-dasharray="1.2,1.4"/>
<ellipse cx="17" cy="24.2" rx="7.6" ry="5" fill="#ff0000"/>
<rect x="32.8" y="20" width="2.6" height="5.6" fill="#00dd00"/>
<path d="M30.6 25 L37.6 25 L34.1 29.2 Z" fill="#00dd00"/>
</g>
<text x="846.55" y="617.4" font-size="8.8" text-anchor="start" fill="#ffffff" font-weight="bold" textLength="37.5" lengthAdjust="spacingAndGlyphs">第二套保护</text>
<text x="846.55" y="628" font-size="8.6" text-anchor="start" fill="#ffffff" font-weight="bold" textLength="40.5" lengthAdjust="spacingAndGlyphs">CSC-326T2</text>
<g transform="translate(773.9,637.2)">
<rect x="0" y="0" width="48" height="32" fill="#dcdcdc"/>
<rect x="4.2" y="4.9" width="17.6" height="8.4" fill="#8e8e8e" stroke="#111" stroke-width="1.1"/>
<rect x="26.5" y="6.2" width="3.8" height="2.4" fill="#5a5a5a"/>
<rect x="26.5" y="10.2" width="3.8" height="2.4" fill="#5a5a5a"/>
<rect x="38.6" y="6.2" width="3.8" height="2.4" fill="#5a5a5a"/>
<rect x="38.6" y="10.2" width="3.8" height="2.4" fill="#5a5a5a"/>
<circle cx="34.4" cy="9.0" r="3.6" fill="#5a5a5a"/>
<circle cx="34.4" cy="9.0" r="1.6" fill="none" stroke="#999" stroke-width="0.6"/>
<rect x="5.1" y="17.8" width="37.5" height="11.6" rx="2.6" fill="#dcdcdc" stroke="#222" stroke-width="1" stroke-dasharray="1.2,1.4"/>
<ellipse cx="17" cy="24.2" rx="7.6" ry="5" fill="#ff0000"/>
<rect x="32.8" y="20" width="2.6" height="5.6" fill="#00dd00"/>
<path d="M30.6 25 L37.6 25 L34.1 29.2 Z" fill="#00dd00"/>
</g>
<text x="775.4" y="678.6" font-size="8.8" text-anchor="start" fill="#ffffff" font-weight="bold" textLength="37.5" lengthAdjust="spacingAndGlyphs">第一套保护</text>
<text x="775.4" y="689.2" font-size="8.6" text-anchor="start" fill="#ffffff" font-weight="bold" textLength="45.0" lengthAdjust="spacingAndGlyphs">PRS-778NT2</text>
<g transform="translate(842.8,637.2)">
<rect x="0" y="0" width="48" height="32" fill="#dcdcdc"/>
<rect x="4.2" y="4.9" width="17.6" height="8.4" fill="#8e8e8e" stroke="#111" stroke-width="1.1"/>
<rect x="26.5" y="6.2" width="3.8" height="2.4" fill="#5a5a5a"/>
<rect x="26.5" y="10.2" width="3.8" height="2.4" fill="#5a5a5a"/>
<rect x="38.6" y="6.2" width="3.8" height="2.4" fill="#5a5a5a"/>
<rect x="38.6" y="10.2" width="3.8" height="2.4" fill="#5a5a5a"/>
<circle cx="34.4" cy="9.0" r="3.6" fill="#5a5a5a"/>
<circle cx="34.4" cy="9.0" r="1.6" fill="none" stroke="#999" stroke-width="0.6"/>
<rect x="5.1" y="17.8" width="37.5" height="11.6" rx="2.6" fill="#dcdcdc" stroke="#222" stroke-width="1" stroke-dasharray="1.2,1.4"/>
<ellipse cx="17" cy="24.2" rx="7.6" ry="5" fill="#ff0000"/>
<rect x="32.8" y="20" width="2.6" height="5.6" fill="#00dd00"/>
<path d="M30.6 25 L37.6 25 L34.1 29.2 Z" fill="#00dd00"/>
</g>
<text x="846.55" y="678.6" font-size="8.8" text-anchor="start" fill="#ffffff" font-weight="bold" textLength="37.5" lengthAdjust="spacingAndGlyphs">第二套保护</text>
<text x="846.55" y="689.2" font-size="8.6" text-anchor="start" fill="#ffffff" font-weight="bold" textLength="40.5" lengthAdjust="spacingAndGlyphs">WBH-801T2</text>
<g transform="translate(842.8,695.8)">
<rect x="0" y="0" width="48" height="32" fill="#dcdcdc"/>
<rect x="4.2" y="4.9" width="17.6" height="8.4" fill="#8e8e8e" stroke="#111" stroke-width="1.1"/>
<rect x="26.5" y="6.2" width="3.8" height="2.4" fill="#5a5a5a"/>
<rect x="26.5" y="10.2" width="3.8" height="2.4" fill="#5a5a5a"/>
<rect x="38.6" y="6.2" width="3.8" height="2.4" fill="#5a5a5a"/>
<rect x="38.6" y="10.2" width="3.8" height="2.4" fill="#5a5a5a"/>
<circle cx="34.4" cy="9.0" r="3.6" fill="#5a5a5a"/>
<circle cx="34.4" cy="9.0" r="1.6" fill="none" stroke="#999" stroke-width="0.6"/>
<rect x="5.1" y="17.8" width="37.5" height="11.6" rx="2.6" fill="#dcdcdc" stroke="#222" stroke-width="1" stroke-dasharray="1.2,1.4"/>
<ellipse cx="17" cy="24.2" rx="7.6" ry="5" fill="#ff0000"/>
<rect x="32.8" y="20" width="2.6" height="5.6" fill="#00dd00"/>
<path d="M30.6 25 L37.6 25 L34.1 29.2 Z" fill="#00dd00"/>
</g>
<text x="846.55" y="737.1999999999999" font-size="8.8" text-anchor="start" fill="#ffffff" font-weight="bold" textLength="37.5" lengthAdjust="spacingAndGlyphs">第二套保护</text>
<text x="846.55" y="747.8" font-size="8.6" text-anchor="start" fill="#ffffff" font-weight="bold" textLength="40.5" lengthAdjust="spacingAndGlyphs">PCS-978T2</text>
<text x="1338.5" y="380.5" font-size="11.5" text-anchor="start" fill="#e6e6e6" font-weight="normal">装置状态图例</text>
<rect x="1338.3" y="393.1" width="8.7" height="12.8" fill="#ff0000"/>
<text x="1350.8" y="403.3" font-size="11" text-anchor="start" fill="#d8d8d8" font-weight="normal" textLength="14.2" lengthAdjust="spacingAndGlyphs">---</text>
<text x="1369" y="403.7" font-size="11.5" text-anchor="start" fill="#e6e6e6" font-weight="normal">跳闸</text>
<rect x="1338.3" y="409.1" width="8.7" height="12.8" fill="#ff8c00"/>
<text x="1350.8" y="419.3" font-size="11" text-anchor="start" fill="#d8d8d8" font-weight="normal" textLength="14.2" lengthAdjust="spacingAndGlyphs">---</text>
<text x="1369" y="419.7" font-size="11.5" text-anchor="start" fill="#e6e6e6" font-weight="normal">闭锁</text>
<rect x="1338.3" y="424.6" width="8.7" height="12.8" fill="#00e5ff"/>
<text x="1350.8" y="434.8" font-size="11" text-anchor="start" fill="#d8d8d8" font-weight="normal" textLength="14.2" lengthAdjust="spacingAndGlyphs">---</text>
<text x="1369" y="435.2" font-size="11.5" text-anchor="start" fill="#e6e6e6" font-weight="normal">检修</text>
<rect x="1338.3" y="440.6" width="8.7" height="12.8" fill="#ffff00"/>
<text x="1350.8" y="450.8" font-size="11" text-anchor="start" fill="#d8d8d8" font-weight="normal" textLength="14.2" lengthAdjust="spacingAndGlyphs">---</text>
<text x="1369" y="451.2" font-size="11.5" text-anchor="start" fill="#e6e6e6" font-weight="normal">异常</text>
<rect x="1338.3" y="456.6" width="8.7" height="12.8" fill="#00ee00"/>
<text x="1350.8" y="466.8" font-size="11" text-anchor="start" fill="#d8d8d8" font-weight="normal" textLength="14.2" lengthAdjust="spacingAndGlyphs">---</text>
<text x="1369" y="467.2" font-size="11.5" text-anchor="start" fill="#e6e6e6" font-weight="normal">运行</text>
<ellipse cx="1341.8" cy="477.7" rx="6.8" ry="4.5" fill="#00ee00"/>
<text x="1350.8" y="481.5" font-size="11" text-anchor="start" fill="#d8d8d8" font-weight="normal" textLength="14.2" lengthAdjust="spacingAndGlyphs">---</text>
<text x="1369" y="481.9" font-size="11.5" text-anchor="start" fill="#e6e6e6" font-weight="normal">通信正常</text>
<ellipse cx="1341.8" cy="494" rx="6.8" ry="4.5" fill="#ff0000"/>
<text x="1350.8" y="497.8" font-size="11" text-anchor="start" fill="#d8d8d8" font-weight="normal" textLength="14.2" lengthAdjust="spacingAndGlyphs">---</text>
<text x="1369" y="498.2" font-size="11.5" text-anchor="start" fill="#e6e6e6" font-weight="normal">通信中断</text>
<rect x="1340.2" y="503.7" width="3" height="5.5" fill="#00ee00"/>
<path d="M1337.4 508.7 L1345.8 508.7 L1341.7 514.0 Z" fill="#00ee00"/>
<text x="1350.8" y="512.5" font-size="11" text-anchor="start" fill="#d8d8d8" font-weight="normal" textLength="14.2" lengthAdjust="spacingAndGlyphs">---</text>
<text x="1369" y="512.9" font-size="11.5" text-anchor="start" fill="#e6e6e6" font-weight="normal">支持远方修改定值</text>
<rect x="1340.2" y="519.5" width="3" height="5.5" fill="#ff0000"/>
<path d="M1337.4 524.5 L1345.8 524.5 L1341.7 529.8 Z" fill="#ff0000"/>
<text x="1350.8" y="528.3" font-size="11" text-anchor="start" fill="#d8d8d8" font-weight="normal" textLength="14.2" lengthAdjust="spacingAndGlyphs">---</text>
<text x="1369" y="528.7" font-size="11.5" text-anchor="start" fill="#e6e6e6" font-weight="normal">不支持远方修改定值</text>
<rect x="403" y="631.9" width="94.89999999999998" height="184.20000000000005" fill="none" stroke="#8e8e8e" stroke-width="1.5" stroke-dasharray="4,2"/>
<text x="369.5" y="727.5" font-size="7.4" text-anchor="middle" fill="#cfcfcf" font-weight="normal">110kV主变间隔</text>
<line x1="446.3" y1="636" x2="446.3" y2="648.5" stroke="#e8e8e8" stroke-width="1.6"/>
<circle cx="446.3" cy="642.1" r="1.8" fill="#e8e8e8"/>
<line x1="443.3" y1="648.5" x2="449.3" y2="648.5" stroke="#e8e8e8" stroke-width="1.6"/>
<line x1="441.3" y1="649.5" x2="446.3" y2="661" stroke="#e8e8e8" stroke-width="1.6"/>
<line x1="446.3" y1="661" x2="446.3" y2="692.7" stroke="#e8e8e8" stroke-width="1.6"/>
<circle cx="446.3" cy="668.3" r="1.8" fill="#e8e8e8"/>
<text x="450" y="670.5" font-size="7.4" text-anchor="start" fill="#cfcfcf" font-weight="normal">2G</text>
<line x1="427.7" y1="643.6" x2="438.7" y2="643.6" stroke="#e8e8e8" stroke-width="1.6"/>
<line x1="429.7" y1="640.6" x2="436.7" y2="640.6" stroke="#e8e8e8" stroke-width="1.4"/>
<line x1="431.7" y1="637.6" x2="434.7" y2="637.6" stroke="#e8e8e8" stroke-width="1.4"/>
<line x1="433.2" y1="644" x2="438.3" y2="662" stroke="#e8e8e8" stroke-width="1.6"/>
<line x1="430.5" y1="662" x2="436" y2="662" stroke="#e8e8e8" stroke-width="1.6"/>
<line x1="433.2" y1="662" x2="433.2" y2="676.1" stroke="#e8e8e8" stroke-width="1.6"/>
<circle cx="433.2" cy="668.7" r="1.8" fill="#e8e8e8"/>
<line x1="433.2" y1="676.1" x2="446.3" y2="676.1" stroke="#e8e8e8" stroke-width="1.6"/>
<circle cx="446.3" cy="676.1" r="1.8" fill="#e8e8e8"/>
<text x="421" y="655.5" font-size="7.4" text-anchor="start" fill="#cfcfcf" font-weight="normal">3GD</text>
<circle cx="446.3" cy="689" r="1.8" fill="#e8e8e8"/>
<rect x="442.4" y="692.7" width="8.1" height="17.1" fill="none" stroke="#e8e8e8" stroke-width="1.5"/>
<circle cx="446.3" cy="713" r="1.8" fill="#e8e8e8"/>
<line x1="446.3" y1="709.8" x2="446.3" y2="754" stroke="#e8e8e8" stroke-width="1.6"/>
<text x="465" y="697.5" font-size="7.4" text-anchor="start" fill="#cfcfcf" font-weight="normal">CB</text>
<polyline points="446.3,727.5 467.7,727.5 467.7,749.5" fill="none" stroke="#e8e8e8" stroke-width="1.6"/>
<circle cx="446.3" cy="727.5" r="1.8" fill="#e8e8e8"/>
<circle cx="467.7" cy="743.2" r="1.8" fill="#e8e8e8"/>
<line x1="464.7" y1="749.5" x2="470.7" y2="749.5" stroke="#e8e8e8" stroke-width="1.6"/>
<line x1="462.6" y1="750.5" x2="467.7" y2="762.2" stroke="#e8e8e8" stroke-width="1.6"/>
<line x1="467.7" y1="762.2" x2="467.7" y2="767.6" stroke="#e8e8e8" stroke-width="1.6"/>
<line x1="462.2" y1="767.6" x2="473.2" y2="767.6" stroke="#e8e8e8" stroke-width="1.6"/>
<line x1="464.2" y1="770.6" x2="471.2" y2="770.6" stroke="#e8e8e8" stroke-width="1.4"/>
<line x1="466.2" y1="773.6" x2="469.2" y2="773.6" stroke="#e8e8e8" stroke-width="1.4"/>
<text x="477" y="759.5" font-size="7.4" text-anchor="start" fill="#cfcfcf" font-weight="normal">2GD</text>
<circle cx="446.3" cy="747.2" r="1.8" fill="#e8e8e8"/>
<line x1="446.3" y1="754" x2="451.8" y2="766.7" stroke="#e8e8e8" stroke-width="1.6"/>
<line x1="443.8" y1="766.7" x2="448.8" y2="766.7" stroke="#e8e8e8" stroke-width="1.6"/>
<line x1="446.3" y1="766.7" x2="446.3" y2="807.3" stroke="#e8e8e8" stroke-width="1.6"/>
<line x1="446.3" y1="807.3" x2="446.3" y2="845" stroke="#a0a0a0" stroke-width="1.6"/>
<circle cx="446.3" cy="773" r="1.8" fill="#e8e8e8"/>
<text x="446.5" y="753.5" font-size="7.4" text-anchor="start" fill="#cfcfcf" font-weight="normal">1G</text>
<line x1="419.8" y1="746.3" x2="430.8" y2="746.3" stroke="#e8e8e8" stroke-width="1.6"/>
<line x1="421.8" y1="743.3" x2="428.8" y2="743.3" stroke="#e8e8e8" stroke-width="1.4"/>
<line x1="423.8" y1="740.3" x2="426.8" y2="740.3" stroke="#e8e8e8" stroke-width="1.4"/>
<line x1="425.3" y1="747.5" x2="429.8" y2="764" stroke="#e8e8e8" stroke-width="1.6"/>
<line x1="422.5" y1="764.9" x2="428.5" y2="764.9" stroke="#e8e8e8" stroke-width="1.6"/>
<line x1="425.3" y1="764.9" x2="425.3" y2="778.4" stroke="#e8e8e8" stroke-width="1.6"/>
<circle cx="425.3" cy="771.6" r="1.8" fill="#e8e8e8"/>
<line x1="425.3" y1="778.4" x2="446.3" y2="778.4" stroke="#e8e8e8" stroke-width="1.6"/>
<circle cx="446.3" cy="778.4" r="1.8" fill="#e8e8e8"/>
<text x="410" y="747.5" font-size="7.4" text-anchor="start" fill="#cfcfcf" font-weight="normal">1GD</text>
<circle cx="446.3" cy="807.3" r="1.8" fill="#e8e8e8"/>
<rect x="156.7" y="837.7" width="1338.8" height="14.799999999999955" fill="none" stroke="#8e8e8e" stroke-width="1.5" stroke-dasharray="4,2"/>
<line x1="164.5" y1="845.1" x2="1488" y2="845.1" stroke="#f0405a" stroke-width="3"/>
<text x="158" y="832" font-size="7.4" text-anchor="start" fill="#cfcfcf" font-weight="normal">110kV母线</text>
<text x="206" y="831" font-size="7.4" text-anchor="start" fill="#cfcfcf" font-weight="normal">1M</text>
<circle cx="380" cy="845.1" r="2.4" fill="#ffffff"/>
<circle cx="446.7" cy="845.1" r="2.4" fill="#ffffff"/>
<circle cx="740.3" cy="845.1" r="2.4" fill="#ffffff"/>
<rect x="333.4" y="868.9" width="78.80000000000001" height="162.80000000000007" fill="none" stroke="#8e8e8e" stroke-width="1.5" stroke-dasharray="4,2"/>
<text x="374.3" y="1045.5" font-size="7.4" text-anchor="middle" fill="#cfcfcf" font-weight="normal">线路1</text>
<line x1="380.1" y1="845.1" x2="380.1" y2="877.6" stroke="#a0a0a0" stroke-width="1.6"/>
<line x1="380.1" y1="877.6" x2="380.1" y2="884.6" stroke="#e8e8e8" stroke-width="1.6"/>
<circle cx="380.1" cy="877.6" r="1.8" fill="#e8e8e8"/>
<line x1="377.1" y1="884.6" x2="383.1" y2="884.6" stroke="#e8e8e8" stroke-width="1.6"/>
<line x1="380.1" y1="897" x2="385.40000000000003" y2="884.6" stroke="#e8e8e8" stroke-width="1.6"/>
<line x1="380.1" y1="896" x2="380.1" y2="917" stroke="#e8e8e8" stroke-width="1.6"/>
<circle cx="380.1" cy="904" r="1.8" fill="#e8e8e8"/>
<circle cx="380.1" cy="915" r="1.8" fill="#e8e8e8"/>
<rect x="376.1" y="917.2" width="8" height="18.5" fill="none" stroke="#e8e8e8" stroke-width="1.5"/>
<circle cx="380.1" cy="937.8" r="1.8" fill="#e8e8e8"/>
<line x1="380.1" y1="935.7" x2="380.1" y2="968.3" stroke="#e8e8e8" stroke-width="1.6"/>
<text x="396.6" y="897.5" font-size="7.4" text-anchor="start" fill="#cfcfcf" font-weight="normal">1G</text>
<text x="396.6" y="923.5" font-size="7.4" text-anchor="start" fill="#cfcfcf" font-weight="normal">CB</text>
<polyline points="380.1,950.3 358.0,950.3 358.0,971.8" fill="none" stroke="#e8e8e8" stroke-width="1.6"/>
<circle cx="380.1" cy="950.3" r="1.8" fill="#e8e8e8"/>
<circle cx="358.0" cy="965.3" r="1.8" fill="#e8e8e8"/>
<line x1="355.0" y1="971.8" x2="361.0" y2="971.8" stroke="#e8e8e8" stroke-width="1.6"/>
<line x1="358.0" y1="984" x2="363.40000000000003" y2="972.7" stroke="#e8e8e8" stroke-width="1.6"/>
<line x1="358.0" y1="984" x2="358.0" y2="990" stroke="#e8e8e8" stroke-width="1.6"/>
<line x1="352.5" y1="990.3" x2="363.5" y2="990.3" stroke="#e8e8e8" stroke-width="1.6"/>
<line x1="354.5" y1="993.3" x2="361.5" y2="993.3" stroke="#e8e8e8" stroke-width="1.4"/>
<line x1="356.5" y1="996.3" x2="359.5" y2="996.3" stroke="#e8e8e8" stroke-width="1.4"/>
<circle cx="380.1" cy="961.8" r="1.8" fill="#e8e8e8"/>
<line x1="380.5" y1="968.3" x2="375.20000000000005" y2="981.5" stroke="#e8e8e8" stroke-width="1.6"/>
<line x1="377.1" y1="981.5" x2="383.1" y2="981.5" stroke="#e8e8e8" stroke-width="1.6"/>
<line x1="380.1" y1="981.5" x2="380.1" y2="1022.9" stroke="#e8e8e8" stroke-width="1.6"/>
<circle cx="380.1" cy="988.5" r="1.8" fill="#e8e8e8"/>
<text x="381.1" y="967" font-size="7.4" text-anchor="start" fill="#cfcfcf" font-weight="normal">2G</text>
<text x="370.1" y="989" font-size="7.4" text-anchor="start" fill="#cfcfcf" font-weight="normal">1GD</text>
<polyline points="376.6,1017.5 380.1,1023 383.6,1017.5" fill="none" stroke="#e8e8e8" stroke-width="1.5"/>
<text x="378.1" y="1031" font-size="8" text-anchor="start" fill="#bbbbbb" font-weight="normal">1</text>
<rect x="693.5999999999999" y="868.9" width="78.79999999999995" height="162.80000000000007" fill="none" stroke="#8e8e8e" stroke-width="1.5" stroke-dasharray="4,2"/>
<text x="732.5" y="1042.5" font-size="7.4" text-anchor="middle" fill="#cfcfcf" font-weight="normal">线路2</text>
<line x1="740.3" y1="845.1" x2="740.3" y2="877.6" stroke="#a0a0a0" stroke-width="1.6"/>
<line x1="740.3" y1="877.6" x2="740.3" y2="884.6" stroke="#e8e8e8" stroke-width="1.6"/>
<circle cx="740.3" cy="877.6" r="1.8" fill="#e8e8e8"/>
<line x1="737.3" y1="884.6" x2="743.3" y2="884.6" stroke="#e8e8e8" stroke-width="1.6"/>
<line x1="740.3" y1="897" x2="745.5999999999999" y2="884.6" stroke="#e8e8e8" stroke-width="1.6"/>
<line x1="740.3" y1="896" x2="740.3" y2="917" stroke="#e8e8e8" stroke-width="1.6"/>
<circle cx="740.3" cy="904" r="1.8" fill="#e8e8e8"/>
<circle cx="740.3" cy="915" r="1.8" fill="#e8e8e8"/>
<rect x="736.3" y="917.2" width="8" height="18.5" fill="none" stroke="#e8e8e8" stroke-width="1.5"/>
<circle cx="740.3" cy="937.8" r="1.8" fill="#e8e8e8"/>
<line x1="740.3" y1="935.7" x2="740.3" y2="968.3" stroke="#e8e8e8" stroke-width="1.6"/>
<text x="756.8" y="897.5" font-size="7.4" text-anchor="start" fill="#cfcfcf" font-weight="normal">1G</text>
<text x="756.8" y="923.5" font-size="7.4" text-anchor="start" fill="#cfcfcf" font-weight="normal">CB</text>
<polyline points="740.3,950.3 718.1999999999999,950.3 718.1999999999999,971.8" fill="none" stroke="#e8e8e8" stroke-width="1.6"/>
<circle cx="740.3" cy="950.3" r="1.8" fill="#e8e8e8"/>
<circle cx="718.1999999999999" cy="965.3" r="1.8" fill="#e8e8e8"/>
<line x1="715.1999999999999" y1="971.8" x2="721.1999999999999" y2="971.8" stroke="#e8e8e8" stroke-width="1.6"/>
<line x1="718.1999999999999" y1="984" x2="723.5999999999999" y2="972.7" stroke="#e8e8e8" stroke-width="1.6"/>
<line x1="718.1999999999999" y1="984" x2="718.1999999999999" y2="990" stroke="#e8e8e8" stroke-width="1.6"/>
<line x1="712.6999999999999" y1="990.3" x2="723.6999999999999" y2="990.3" stroke="#e8e8e8" stroke-width="1.6"/>
<line x1="714.6999999999999" y1="993.3" x2="721.6999999999999" y2="993.3" stroke="#e8e8e8" stroke-width="1.4"/>
<line x1="716.6999999999999" y1="996.3" x2="719.6999999999999" y2="996.3" stroke="#e8e8e8" stroke-width="1.4"/>
<circle cx="740.3" cy="961.8" r="1.8" fill="#e8e8e8"/>
<line x1="740.6999999999999" y1="968.3" x2="735.4" y2="981.5" stroke="#e8e8e8" stroke-width="1.6"/>
<line x1="737.3" y1="981.5" x2="743.3" y2="981.5" stroke="#e8e8e8" stroke-width="1.6"/>
<line x1="740.3" y1="981.5" x2="740.3" y2="1022.9" stroke="#e8e8e8" stroke-width="1.6"/>
<circle cx="740.3" cy="988.5" r="1.8" fill="#e8e8e8"/>
<text x="741.3" y="967" font-size="7.4" text-anchor="start" fill="#cfcfcf" font-weight="normal">2G</text>
<text x="730.3" y="989" font-size="7.4" text-anchor="start" fill="#cfcfcf" font-weight="normal">1GD</text>
<polyline points="736.8,1017.5 740.3,1023 743.8,1017.5" fill="none" stroke="#e8e8e8" stroke-width="1.5"/>
<text x="738.3" y="1031" font-size="8" text-anchor="start" fill="#bbbbbb" font-weight="normal">1</text>
<rect x="991.4" y="607" width="15.0" height="246.29999999999995" fill="none" stroke="#8e8e8e" stroke-width="1.5" stroke-dasharray="4,2"/>
<line x1="998.9" y1="614.4" x2="998.9" y2="846.4" stroke="#ffff00" stroke-width="2.8"/>
<text x="1005.5" y="616.5" font-size="7.4" text-anchor="start" fill="#cfcfcf" font-weight="normal">1M</text>
<text x="999" y="862" font-size="7.4" text-anchor="middle" fill="#cfcfcf" font-weight="normal">35kV母线</text>
<circle cx="998.9" cy="663.6" r="2.6" fill="#ffffff"/>
<circle cx="998.9" cy="681" r="2.6" fill="#ffffff"/>
<rect x="1061" y="632.5" width="206.5" height="60.0" fill="none" stroke="#8e8e8e" stroke-width="1.5" stroke-dasharray="4,2"/>
<text x="1175" y="700.5" font-size="7.4" text-anchor="middle" fill="#cfcfcf" font-weight="normal">低压侧线路</text>
<line x1="998.9" y1="680.6" x2="1062" y2="680.6" stroke="#a4a4a4" stroke-width="1.6"/>
<line x1="1062" y1="680.6" x2="1257" y2="680.6" stroke="#e8e8e8" stroke-width="1.6"/>
<circle cx="1070" cy="680.6" r="1.8" fill="#e8e8e8"/>
<circle cx="1115" cy="680.6" r="1.8" fill="#e8e8e8"/>
<circle cx="1138.8" cy="680.6" r="1.8" fill="#e8e8e8"/>
<circle cx="1173" cy="680.6" r="1.8" fill="#e8e8e8"/>
<circle cx="1190.6" cy="680.6" r="1.8" fill="#e8e8e8"/>
<circle cx="1203.75" cy="680.6" r="1.8" fill="#e8e8e8"/>
<rect x="1123" y="676.2" width="7.6" height="8.8" fill="#000" stroke="#e8e8e8" stroke-width="1.3"/>
<path d="M1121 676 Q1117 680.6 1121 685 M1132.5 676 Q1136.5 680.6 1132.5 685 M1119 677 Q1116 680.6 1119 684 M1134.5 677 Q1137.5 680.6 1134.5 684" fill="none" stroke="#cfcfcf" stroke-width="0.9"/>
<circle cx="1181.6" cy="680.6" r="5.2" fill="#000" stroke="#e8e8e8" stroke-width="1.4"/>
<line x1="1181.6" y1="675.4" x2="1181.6" y2="665.5" stroke="#e8e8e8" stroke-width="1.2"/>
<line x1="1177.5" y1="669" x2="1185.5" y2="667" stroke="#e8e8e8" stroke-width="1"/>
<line x1="1177.5" y1="672" x2="1185.5" y2="670" stroke="#e8e8e8" stroke-width="1"/>
<text x="1174" y="663.5" font-size="7.4" text-anchor="start" fill="#cfcfcf" font-weight="normal">CT</text>
<polyline points="1203.75,680.6 1203.75,667.25 1235,667.25" fill="none" stroke="#e8e8e8" stroke-width="1.6"/>
<circle cx="1228" cy="667.25" r="1.8" fill="#e8e8e8"/>
<line x1="1235" y1="664" x2="1235" y2="670.5" stroke="#e8e8e8" stroke-width="1.6"/>
<line x1="1235" y1="662" x2="1247" y2="667.25" stroke="#e8e8e8" stroke-width="1.6"/>
<line x1="1247" y1="667.25" x2="1252.5" y2="667.25" stroke="#e8e8e8" stroke-width="1.6"/>
<line x1="1252.5" y1="661.75" x2="1252.5" y2="672.75" stroke="#e8e8e8" stroke-width="1.6"/>
<line x1="1255.3" y1="663.75" x2="1255.3" y2="670.75" stroke="#b0b0b0" stroke-width="2.2"/>
<line x1="1258.0" y1="666.05" x2="1258.0" y2="668.45" stroke="#e8e8e8" stroke-width="1.6"/>
<polyline points="1252,676.5 1257.5,680.6 1252,684.7" fill="none" stroke="#e8e8e8" stroke-width="1.5"/>
<text x="1260" y="683.5" font-size="8" text-anchor="start" fill="#bbbbbb" font-weight="normal">1</text>
<text x="1107" y="657" font-size="7.4" text-anchor="start" fill="#cfcfcf" font-weight="normal">1SC</text>
<text x="1246" y="647" font-size="7.4" text-anchor="start" fill="#cfcfcf" font-weight="normal">1GD</text>
</svg></div>

<div id="panel" class="abs">
 <div id="info" class="abs"></div>
 <div class="abs" style="left:46px;top:15px;font-size:13px;color:#e0e0e0;white-space:nowrap;letter-spacing:-0.2px">今天是：2020-08-12 11:20:55</div>
 <div class="abs" style="left:12px;top:38px;font-size:13px;color:#e0e0e0;white-space:nowrap">欢迎您,<span style="color:#f0f000">user</span></div>
 <div class="abs" style="left:88px;top:38px;font-size:13px;color:#e0e0e0;white-space:nowrap;letter-spacing:-0.6px">运行模式：双主机</div>
 <svg class="abs" style="left:238px;top:39px" width="18" height="14" viewBox="0 0 18 14">
  <path d="M9 1 H1.2 V12.8 H9" fill="none" stroke="#d8d040" stroke-width="1.6"/>
  <path d="M5 7 H14 M11 3.5 L15 7 L11 10.5" fill="none" stroke="#d8d040" stroke-width="1.8"/>
 </svg>
 <div id="grad" class="abs"></div>
 <div id="dark" class="abs"></div>
 <div class="abs btn" style="top:81px">运维工作</div>
 <div class="abs badge" style="left:225px;top:67px">14</div>
 <div class="abs btn" style="top:128px">系统异常总告警</div>
 <div class="abs badge" style="left:225px;top:114px">99+</div>
 <div class="abs btn" style="top:231px;background:#00b050">同源数据比对异常</div>
 <div class="abs badge" style="left:225px;top:217px">34</div>
 <div class="abs btn" style="top:281px">MMS通信异常</div>
 <div class="abs badge" style="left:225px;top:267px">99+</div>
 <div class="abs btn" style="top:331px">装置告警</div>
 <div class="abs badge" style="left:225px;top:317px">99+</div>
 <div class="abs btn" style="top:381px">状态监测异常</div>
 <div class="abs badge" style="left:225px;top:367px">99+</div>
 <div id="tabs" class="abs"></div>
 <div class="abs" style="left:130px;top:473px;width:1px;height:36px;background:#5a9cc0"></div>
 <svg class="abs" style="left:31px;top:479px" width="30" height="26" viewBox="0 0 30 26">
  <defs><radialGradient id="mg" cx="0.5" cy="0.5" r="0.5"><stop offset="0" stop-color="#b8b8b8"/><stop offset="0.5" stop-color="#606060"/><stop offset="1" stop-color="#303030"/></radialGradient>
  <linearGradient id="mh" x1="0" y1="0" x2="0" y2="1"><stop offset="0" stop-color="#f0f0f0"/><stop offset="1" stop-color="#909090"/></linearGradient></defs>
  <path d="M2 8 L12 3 L14 19 L3 15 Z" fill="url(#mh)" stroke="#707070" stroke-width="0.5"/>
  <rect x="1" y="9" width="4" height="7" rx="1" fill="#e8b040"/>
  <ellipse cx="19" cy="12" rx="9" ry="10" fill="url(#mg)" stroke="#f0b420" stroke-width="1.8"/>
  <ellipse cx="18" cy="12" rx="3.5" ry="3" fill="#d8d8d8" stroke="#888" stroke-width="0.5"/>
 </svg>
 <div class="abs" style="left:67px;top:481px;font-size:17.5px;color:#f0f0f0;letter-spacing:-0.6px">SOE</div>
 <svg class="abs" style="left:161px;top:478px" width="27" height="26" viewBox="0 0 27 26">
  <path d="M13.5 13 L13.5 0.5 A12.5 12.5 0 0 1 24.3 19.2 Z" fill="#4aa0d0"/>
  <path d="M13.5 13 L24.3 19.2 A12.5 12.5 0 0 1 2.7 19.2 Z" fill="#c02828"/>
  <path d="M13.5 13 L2.7 19.2 A12.5 12.5 0 0 1 13.5 0.5 Z" fill="#7cc040"/>
 </svg>
 <div class="abs" style="left:196px;top:481px;font-size:18px;color:#f0f0f0">统计</div>
 <div class="abs row r1" style="top:509px"></div>
 <div class="abs row r2" style="top:568px"></div>
 <div class="abs row r1" style="top:627px"></div>
 <div class="abs row r2" style="top:686px"></div>
 <div class="abs row r1" style="top:745px"></div>
 <div class="abs row r2" style="top:804px"></div>
 <div class="abs row r1" style="top:863px"></div>
 <div class="abs dev" style="top:529px">RM2202</div>
 <div class="abs ev" style="top:515px">GOOSE重启复归[0x000d]</div>
 <div class="abs tm" style="top:544px">2020-08-12 11:17:02:813</div>
 <div class="abs dev" style="top:588px">RM2202</div>
 <div class="abs ev" style="top:574px">GOOSE重启复归[0x000c]</div>
 <div class="abs tm" style="top:603px">2020-08-12 11:17:02:813</div>
 <div class="abs dev" style="top:647px">RM2202</div>
 <div class="abs ev" style="top:633px">GOOSE重启复归[0x000b]</div>
 <div class="abs tm" style="top:662px">2020-08-12 11:17:02:813</div>
 <div class="abs dev" style="top:706px">PL2211A</div>
 <div class="abs ev" style="top:692px">智能终端GOOSE链路A断链断链</div>
 <div class="abs tm" style="top:721px">2020-08-12 11:17:01:238</div>
 <div class="abs dev" style="top:765px">PL2211A</div>
 <div class="abs ev" style="top:751px">故障序号[20889]</div>
 <div class="abs tm" style="top:780px">2020-08-12 11:16:42:644</div>
 <div class="abs dev" style="top:824px">PL2211A</div>
 <div class="abs ev" style="top:810px">录波完成[1]</div>
 <div class="abs tm" style="top:839px">2020-08-12 11:16:42:644</div>
 <div class="abs dev" style="top:883px">PL2211A</div>
 <div class="abs ev" style="top:869px">保护PT断线[1]</div>
 <div class="abs tm" style="top:898px">2020-08-12 11:16:42:275</div>
</div>
</body></html>
